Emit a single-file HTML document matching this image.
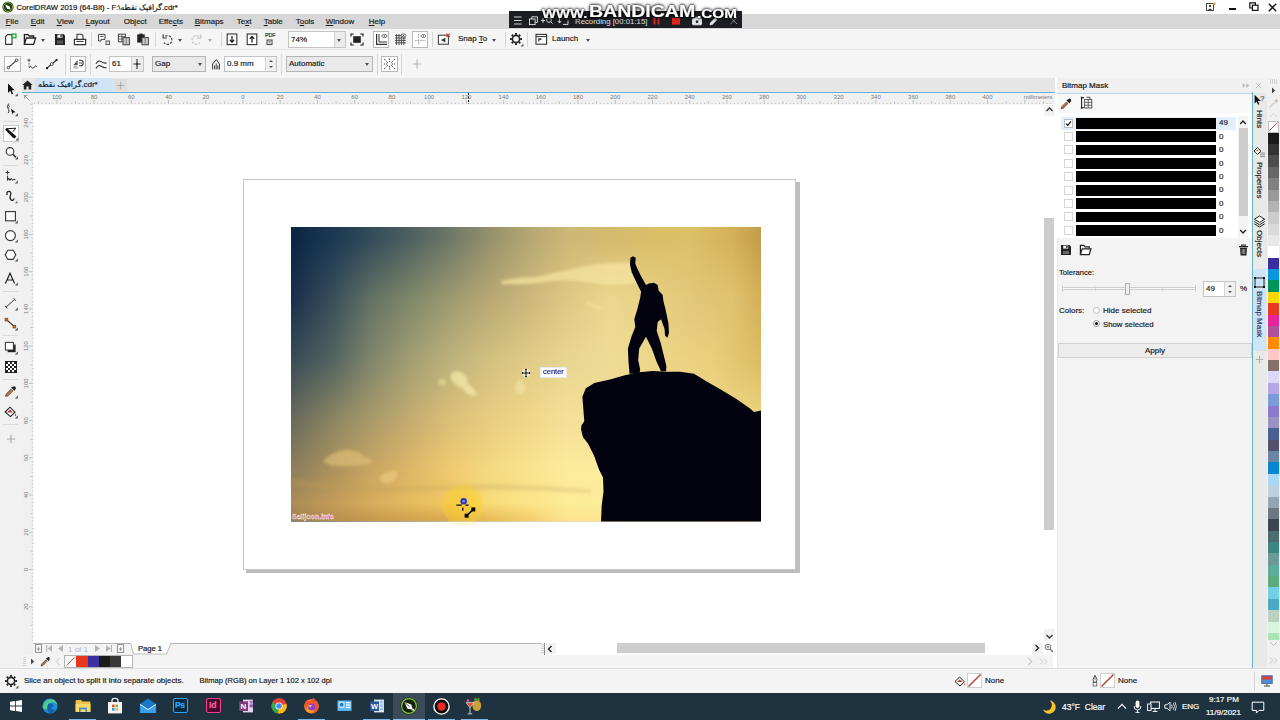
<!DOCTYPE html>
<html lang="en">
<head>
<meta charset="utf-8">
<title>CorelDRAW 2019 (64-Bit) - F:\گرافیک نقطه.cdr*</title>
<style>
*{box-sizing:border-box;margin:0;padding:0}
html,body{width:1280px;height:720px;overflow:hidden;background:#f0f0f0}
body{font-family:"Liberation Sans","DejaVu Sans",sans-serif;font-size:8px;color:#1a1a1a;position:relative}
.abs{position:absolute}
.t{position:absolute;white-space:nowrap;line-height:10px;height:10px;-webkit-text-stroke:0.180px currentColor}
.ic{position:absolute;overflow:visible}
#titlebar{left:0;top:0;width:1280px;height:14px;background:#fff}
#menubar{left:0;top:14px;width:1280px;height:15px;background:#d7d7d7}
#toolbar{left:0;top:29px;width:1280px;height:21px;background:#f5f5f5;border-bottom:1px solid #e2e2e2}
#propbar{left:0;top:50px;width:1280px;height:28px;background:#f5f5f5}
#tabbar{left:0;top:78px;width:1055px;height:14px;background:#e6e6e6}
#toolbox{left:0;top:78px;width:22px;height:590px;background:#f1f1f1}
#hruler{left:22px;top:92px;width:1033px;height:12px;background:#f0f0f0;border-top:1px solid #64b2cc}
#vruler{left:22px;top:104px;width:11px;height:537px;background:#f0f0f0}
#canvas{left:33px;top:104px;width:1010px;height:537px;background:#fff}
#vscroll{left:1043px;top:104px;width:13px;height:537px;background:#fff}
#pagenav{left:22px;top:641px;width:1033px;height:14px;background:#f3f3f3}
#docpal{left:22px;top:655px;width:1033px;height:13px;background:#f3f3f3}
#statusbar{left:0;top:668px;width:1280px;height:25px;background:#f4f4f4;border-top:1px solid #dcdcdc}
#taskbar{left:0;top:693px;width:1280px;height:27px;background:#1e3240}
#docker{left:1055px;top:78px;width:197px;height:590px;background:#f3f3f3;border-left:2px solid #fff;box-shadow:inset 1px 0 0 #e9e9e9}
#dtabs{left:1252px;top:92px;width:15px;height:576px;background:#e9e9e9;border-left:1px solid #64b2cc}
#palette{left:1267px;top:78px;width:13px;height:590px;background:#f1f1f1}
.sep{position:absolute;width:1px;background:#d6d6d6}
.box{position:absolute;border:1px solid #b9b9b9;background:#fff}
.field{position:absolute;border:1px solid #c4c4c4;background:#fff}
.arrow{position:absolute;width:0;height:0;border-left:2.700px solid transparent;border-right:2.700px solid transparent;border-top:3.200px solid #505050}

.vt{writing-mode:vertical-rl;font-size:8px;width:10px;height:auto;line-height:10px;color:#222}
.bw{height:20px;line-height:20px;font-weight:bold;color:#fff;transform-origin:0 50%;text-shadow:0 0 1.500px #000,0 0 2.500px rgba(0,0,0,0.900),0 0 4px rgba(0,0,0,0.600),0 1px 3px rgba(0,0,0,0.500)}
u{text-decoration:underline;text-underline-offset:1px}
</style>
</head>
<body>
<!-- ===== Title bar ===== -->
<div id="titlebar" class="abs">
  <svg class="ic" style="left:2px;top:1px" width="12" height="12" viewBox="0 0 12 12"><circle cx="6" cy="6" r="5.6" fill="#2b3a12"/><circle cx="6" cy="6" r="4.6" fill="none" stroke="#7fc241" stroke-width="0.9"/><path d="M3.2 3.4 L7.6 5.2 L8.6 8.6 L5 7.8 Z" fill="#fff"/></svg>
  <span class="t" id="title" style="left:16.500px;top:2.700px;font-size:7.700px;color:#111">CorelDRAW 2019 (64-Bit) - F:\<span dir="rtl">گرافیک نقطه</span>.cdr*</span>
  <svg class="ic" style="left:1205px;top:2px" width="12" height="10" viewBox="0 0 12 10"><rect x="1.5" y="1.5" width="7" height="7" fill="none" stroke="#444" stroke-width="1"/><circle cx="5" cy="4" r="1.2" fill="#444"/><path d="M2.8 8 Q5 4.8 7.2 8Z" fill="#444"/><circle cx="9.3" cy="1.8" r="1.4" fill="#e3a21a"/></svg>
  <div class="abs" style="left:1229px;top:8px;width:7px;height:2px;background:#111"></div>
  <svg class="ic" style="left:1249px;top:2px" width="10" height="10" viewBox="0 0 10 10"><path d="M3.400 6H0.800V0.800H6.400V3" fill="none" stroke="#111" stroke-width="1.200"/><rect x="3.400" y="3.200" width="5.600" height="5.200" fill="#fff" stroke="#111" stroke-width="1.200"/></svg>
  <svg class="ic" style="left:1268px;top:2.500px" width="9" height="9" viewBox="0 0 9 9"><path d="M0.8 0.8L8.2 8.2M8.2 0.8L0.8 8.2" stroke="#111" stroke-width="1.4"/></svg>
</div>

<!-- ===== Menu bar ===== -->
<div id="menubar" class="abs">
  <span class="t" style="left:5.700px;top:2.700px"><u>F</u>ile</span>
  <span class="t" style="left:30.700px;top:2.700px"><u>E</u>dit</span>
  <span class="t" style="left:56.700px;top:2.700px"><u>V</u>iew</span>
  <span class="t" style="left:85.700px;top:2.700px"><u>L</u>ayout</span>
  <span class="t" style="left:123.700px;top:2.700px">Ob<u>j</u>ect</span>
  <span class="t" style="left:158.700px;top:2.700px">Effe<u>c</u>ts</span>
  <span class="t" style="left:194.700px;top:2.700px"><u>B</u>itmaps</span>
  <span class="t" style="left:236.700px;top:2.700px">Te<u>x</u>t</span>
  <span class="t" style="left:263.700px;top:2.700px"><u>T</u>able</span>
  <span class="t" style="left:295.700px;top:2.700px">T<u>o</u>ols</span>
  <span class="t" style="left:325.700px;top:2.700px"><u>W</u>indow</span>
  <span class="t" style="left:368.700px;top:2.700px"><u>H</u>elp</span>
</div>
<!-- ===== Standard toolbar ===== -->
<div id="toolbar" class="abs">
  <!-- new -->
  <svg class="ic" style="left:4px;top:4px" width="14" height="13" viewBox="0 0 14 13"><path d="M1.6 3.6 L3.6 1.6 H8 V11.4 H1.6Z" fill="#fff" stroke="#333" stroke-width="1.1"/><rect x="7.6" y="0.4" width="5" height="5" fill="#2aa84a"/><path d="M10.1 1.4v3M8.6 2.9h3" stroke="#fff" stroke-width="1"/></svg>
  <!-- open -->
  <svg class="ic" style="left:23px;top:4px" width="14" height="13" viewBox="0 0 14 13"><path d="M1.4 11.4V1.6H5L6.2 3H10.6V5" fill="none" stroke="#222" stroke-width="1.3"/><path d="M1.4 11.4L3.4 5H12.6L10.6 11.4Z" fill="#fff" stroke="#222" stroke-width="1.3"/></svg>
  <div class="arrow" style="left:41px;top:10px"></div>
  <!-- save -->
  <svg class="ic" style="left:54px;top:4px" width="12" height="13" viewBox="0 0 12 13"><path d="M1 1H9.6L11 2.4V12H1Z" fill="#222"/><rect x="3.4" y="1.6" width="5" height="3.2" fill="#f5f5f5"/><rect x="6.4" y="2" width="1.3" height="2.2" fill="#222"/><rect x="3" y="7.4" width="6" height="3.4" fill="#555"/></svg>
  <!-- print -->
  <svg class="ic" style="left:73px;top:4px" width="14" height="13" viewBox="0 0 14 13"><path d="M4 6.2V1.2H8.6L10 2.6V6.2" fill="#fff" stroke="#333" stroke-width="1.1"/><path d="M1.4 6.4H12.6V11.6H1.4Z" fill="#fff" stroke="#333" stroke-width="1.2"/><path d="M3.4 8.4H10.6" stroke="#333" stroke-width="1"/></svg>
  <div class="sep" style="left:91px;top:3px;height:15px"></div>
  <!-- cut/copy/paste-like -->
  <svg class="ic" style="left:97px;top:4px" width="14" height="13" viewBox="0 0 14 13"><path d="M1.6 1.4H8V6.4H4V8H1.6Z" fill="#fff" stroke="#444" stroke-width="1"/><path d="M3 3.4H6.6" stroke="#444" stroke-width="0.9"/><rect x="9" y="8" width="3.6" height="3.6" fill="#ddd" stroke="#555" stroke-width="0.9"/></svg>
  <svg class="ic" style="left:117px;top:4px" width="14" height="13" viewBox="0 0 14 13"><rect x="1.4" y="1.2" width="7" height="7.6" fill="#fff" stroke="#444" stroke-width="1"/><path d="M1.4 3.6H8.4M1.4 6H8.4M4.8 1.2V8.8" stroke="#444" stroke-width="0.8"/><rect x="6" y="4.6" width="6.4" height="7.2" fill="#ccc" stroke="#444" stroke-width="1"/><path d="M9.2 4.6V11.8" stroke="#666" stroke-width="0.8"/></svg>
  <svg class="ic" style="left:136px;top:4px" width="14" height="13" viewBox="0 0 14 13"><rect x="1.2" y="1.4" width="7.6" height="8.2" fill="#222"/><rect x="3.4" y="0.6" width="3.2" height="2" fill="#222"/><rect x="6" y="4.6" width="6.4" height="7.2" fill="#ccc" stroke="#444" stroke-width="1"/><path d="M9.2 4.6V11.8" stroke="#666" stroke-width="0.8"/></svg>
  <div class="sep" style="left:155px;top:3px;height:15px"></div>
  <!-- undo / redo -->
  <svg class="ic" style="left:161px;top:4px" width="13" height="13" viewBox="0 0 13 13"><path d="M4.2 3.2A4.4 4.4 0 1 1 3 9.6" fill="none" stroke="#444" stroke-width="1.2" stroke-dasharray="2.4 1.2"/><path d="M2.2 1.2V5H6" fill="none" stroke="#444" stroke-width="1.2"/></svg>
  <div class="arrow" style="left:178px;top:10px"></div>
  <svg class="ic" style="left:190px;top:4px" width="13" height="13" viewBox="0 0 13 13"><path d="M8.8 3.2A4.4 4.4 0 1 0 10 9.6" fill="none" stroke="#c4c4c4" stroke-width="1.2" stroke-dasharray="2.4 1.2"/><path d="M10.8 1.2V5H7" fill="none" stroke="#c4c4c4" stroke-width="1.2"/></svg>
  <div class="arrow" style="left:208px;top:10px;border-top-color:#aaa"></div>
  <div class="sep" style="left:221px;top:3px;height:15px"></div>
  <!-- import / export / pdf -->
  <svg class="ic" style="left:226px;top:4px" width="12" height="13" viewBox="0 0 12 13"><rect x="1.2" y="1" width="9.6" height="10.6" fill="#fff" stroke="#333" stroke-width="1.1"/><path d="M6 3V9M3.8 6.8L6 9.2L8.2 6.8" fill="none" stroke="#222" stroke-width="1.3"/></svg>
  <svg class="ic" style="left:246px;top:4px" width="12" height="13" viewBox="0 0 12 13"><rect x="1.2" y="1" width="9.6" height="10.6" fill="#fff" stroke="#333" stroke-width="1.1"/><path d="M6 9.6V3.6M3.8 5.8L6 3.4L8.2 5.8" fill="none" stroke="#222" stroke-width="1.3"/></svg>
  <span class="t" style="left:265px;top:3px;font-size:5.5px;line-height:6px;height:6px;color:#333;letter-spacing:-0.2px">PDF</span>
  <svg class="ic" style="left:266px;top:10px" width="8" height="7" viewBox="0 0 8 7"><rect x="1" y="1" width="5" height="4.6" fill="none" stroke="#444" stroke-width="1"/><path d="M2.4 2.4H4.6M2.4 4H4.6" stroke="#444" stroke-width="0.7"/></svg>
  <!-- zoom combo -->
  <div class="field" style="left:288px;top:2px;width:58px;height:17px"></div>
  <span class="t" style="left:291px;top:6px;font-size:8px">74%</span>
  <div class="abs" style="left:334px;top:3px;width:11px;height:15px;background:#ececec;border-left:1px solid #d0d0d0"></div>
  <div class="arrow" style="left:337px;top:10px"></div>
  <!-- fullscreen -->
  <svg class="ic" style="left:350px;top:4px" width="14" height="13" viewBox="0 0 14 13"><rect x="3.2" y="3.2" width="7.6" height="6.6" fill="#222"/><path d="M1 3.6V1H3.8M10.2 1H13V3.6M13 9.4V12H10.2M3.8 12H1V9.4" fill="none" stroke="#222" stroke-width="1.2"/></svg>
  <!-- rulers / grid / guides -->
  <div class="box" style="left:373px;top:2px;width:16px;height:17px;background:#fdfdfd"></div>
  <svg class="ic" style="left:375px;top:4px" width="13" height="13" viewBox="0 0 13 13"><path d="M1.6 1V11.4H12" fill="none" stroke="#333" stroke-width="1.2"/><path d="M4 1V9H12" fill="none" stroke="#333" stroke-width="1"/><ellipse cx="9.4" cy="3" rx="2.6" ry="1.6" fill="#fff" stroke="#555" stroke-width="0.8"/><circle cx="9.4" cy="3" r="0.7" fill="#444"/></svg>
  <svg class="ic" style="left:394px;top:4px" width="13" height="13" viewBox="0 0 13 13"><path d="M1 2.6H12M1 5H12M1 7.4H12M1 9.8H12M2.6 1V12M5 1V12M7.4 1V12M9.8 1V12" stroke="#444" stroke-width="0.9"/><ellipse cx="9.6" cy="2.4" rx="2.4" ry="1.5" fill="#fff" stroke="#555" stroke-width="0.8"/><circle cx="9.6" cy="2.4" r="0.7" fill="#444"/></svg>
  <div class="box" style="left:412px;top:2px;width:16px;height:17px;background:#fdfdfd"></div>
  <svg class="ic" style="left:414px;top:4px" width="13" height="13" viewBox="0 0 13 13"><path d="M4.6 1V12M1 7.6H12" stroke="#999" stroke-width="0.9" stroke-dasharray="1.6 1"/><ellipse cx="9.4" cy="3" rx="2.4" ry="1.5" fill="#fff" stroke="#666" stroke-width="0.8"/><circle cx="9.4" cy="3" r="0.7" fill="#555"/></svg>
  <div class="sep" style="left:432px;top:3px;height:15px"></div>
  <!-- snap off -->
  <svg class="ic" style="left:437px;top:4px" width="14" height="13" viewBox="0 0 14 13"><rect x="1.4" y="2.2" width="10" height="9" fill="#fff" stroke="#444" stroke-width="1.1"/><path d="M4 7L8.4 4.8V9.4Z" fill="#333"/><path d="M9.4 0.6L12.8 4M12.8 0.6L9.4 4" stroke="#d83a2e" stroke-width="1.1"/></svg>
  <span class="t" style="left:458px;top:5px;font-size:8px">Snap <u>T</u>o</span>
  <div class="arrow" style="left:492px;top:10px"></div>
  <div class="sep" style="left:505px;top:3px;height:15px"></div>
  <!-- gear -->
  <svg class="ic" style="left:509px;top:3px" width="15" height="15" viewBox="0 0 15 15"><circle cx="7" cy="7" r="3.6" fill="none" stroke="#222" stroke-width="1.6"/><g stroke="#222" stroke-width="2"><path d="M7 1V2.8M7 11.2V13M1 7H2.8M11.2 7H13M2.8 2.8L4 4M10 10L11.2 11.2M11.2 2.8L10 4M4 10L2.8 11.2"/></g><path d="M14.4 11.6V14.4H11.6Z" fill="#555"/></svg>
  <div class="sep" style="left:527px;top:3px;height:15px"></div>
  <!-- launch -->
  <svg class="ic" style="left:535px;top:4px" width="13" height="13" viewBox="0 0 13 13"><rect x="1" y="1.4" width="10.6" height="9.8" fill="#fff" stroke="#333" stroke-width="1.1"/><path d="M1 3.6H11.6" stroke="#333" stroke-width="1"/><path d="M3.2 5.2H6.4V7H4.4V8.8H3.2Z" fill="#444"/></svg>
  <span class="t" style="left:552px;top:5px;font-size:8px">Launch</span>
  <div class="arrow" style="left:586px;top:10px"></div>
</div>
<!-- ===== Property bar ===== -->
<div id="propbar" class="abs">
  <div class="box" style="left:4px;top:6px;width:17px;height:16px"></div>
  <svg class="ic" style="left:6px;top:8px" width="13" height="12" viewBox="0 0 13 12"><path d="M2.4 9.6L10.4 2.4" stroke="#333" stroke-width="1.1"/><circle cx="2.4" cy="9.6" r="1.3" fill="#fff" stroke="#333" stroke-width="0.9"/><circle cx="10.6" cy="2.2" r="1.3" fill="#fff" stroke="#333" stroke-width="0.9"/></svg>
  <svg class="ic" style="left:25px;top:8px" width="14" height="12" viewBox="0 0 14 12"><path d="M4 0.6V3.8M2.4 2.2H5.6" stroke="#444" stroke-width="0.9"/><path d="M4 4.8V10" stroke="#444" stroke-width="0.9" stroke-dasharray="1 0.8"/><path d="M4 9.6Q5.4 7.4 6.6 9.4T9.2 9.2T11.8 8.6" fill="none" stroke="#333" stroke-width="1"/></svg>
  <svg class="ic" style="left:45px;top:8px" width="14" height="12" viewBox="0 0 14 12"><path d="M2 10.2L11.6 2" stroke="#222" stroke-width="1.1"/><circle cx="2" cy="10.2" r="1.1" fill="#111"/><circle cx="11.6" cy="2" r="1.1" fill="#111"/><circle cx="6.8" cy="6.1" r="1.5" fill="#fff" stroke="#333" stroke-width="0.8"/></svg>
  <div class="sep" style="left:65px;top:4px;height:21px"></div>
  <div class="box" style="left:70px;top:6px;width:16px;height:16px"></div>
  <svg class="ic" style="left:72px;top:8px" width="13" height="12" viewBox="0 0 13 12"><path d="M1.4 7L5.6 2V7Z" fill="#555"/><rect x="1.4" y="7.4" width="4.2" height="3.4" fill="#bbb"/><path d="M7 2.2H8.4A2.8 2.8 0 0 1 8.4 7.8H7" fill="none" stroke="#333" stroke-width="1.1"/><path d="M7 5H10" stroke="#333" stroke-width="0.9"/></svg>
  <div class="sep" style="left:90px;top:4px;height:21px"></div>
  <svg class="ic" style="left:95px;top:8px" width="13" height="12" viewBox="0 0 13 12"><path d="M1 5.8Q3.4 1.6 6.2 3.6T11.6 5" fill="none" stroke="#333" stroke-width="1.1"/><path d="M1 10.4Q3.4 6.2 6.2 8.2T11.6 9.6" fill="none" stroke="#333" stroke-width="1.1"/></svg>
  <div class="field" style="left:109px;top:6px;width:35px;height:16px"></div>
  <span class="t" style="left:112px;top:9px;font-size:8px">61</span>
  <div class="abs" style="left:131px;top:7px;width:12px;height:14px;background:#ececec;border-left:1px solid #d4d4d4"></div>
  <svg class="ic" style="left:132px;top:8px" width="10" height="12" viewBox="0 0 10 12"><path d="M5 1V11M1.4 6H8.6" stroke="#333" stroke-width="1.1"/><path d="M5 4.6L6.4 6L5 7.4L3.6 6Z" fill="#333"/></svg>
  <!-- Gap combo -->
  <div class="field" style="left:152px;top:6px;width:54px;height:16px;background:#e9e9e9;border-color:#b5b5b5"></div>
  <span class="t" style="left:155px;top:9px;font-size:8px">Gap</span>
  <div class="arrow" style="left:198px;top:13px"></div>
  <svg class="ic" style="left:211px;top:8px" width="10" height="13" viewBox="0 0 10 13"><path d="M1.6 11.4V6L5.4 1.6L8.4 6V11.4" fill="none" stroke="#333" stroke-width="1"/><path d="M3.6 11.4V7.4M5.2 11.4V5.4M6.8 11.4V7.4" stroke="#333" stroke-width="0.9"/></svg>
  <div class="field" style="left:224px;top:6px;width:53px;height:16px"></div>
  <span class="t" style="left:227px;top:9px;font-size:8px">0.9 mm</span>
  <div class="abs" style="left:265px;top:7px;width:11px;height:14px;background:#f0f0f0;border-left:1px solid #d4d4d4"></div>
  <div class="arrow" style="left:269px;top:10px;border-left-width:2px;border-right-width:2px;border-top:0;border-bottom:2.5px solid #555"></div>
  <div class="arrow" style="left:269px;top:16px;border-left-width:2px;border-right-width:2px;border-top-width:2.5px"></div>
  <div class="sep" style="left:281px;top:4px;height:21px"></div>
  <!-- Automatic combo -->
  <div class="field" style="left:286px;top:6px;width:87px;height:16px;background:#e9e9e9;border-color:#b5b5b5"></div>
  <span class="t" style="left:289px;top:9px;font-size:8px">Automatic</span>
  <div class="arrow" style="left:365px;top:13px"></div>
  <div class="sep" style="left:377px;top:4px;height:21px"></div>
  <div class="box" style="left:381px;top:6px;width:17px;height:16px"></div>
  <svg class="ic" style="left:383px;top:8px" width="13" height="12" viewBox="0 0 13 12"><g stroke="#333" stroke-width="0.9" stroke-dasharray="1.4 0.9"><path d="M1 1L5 5M12 1L8 5M1 11L5 7M12 11L8 7M6.5 0.6V4M6.5 8V11.4M0.8 6H4.4M8.6 6H12.2"/></g></svg>
  <div class="sep" style="left:401px;top:4px;height:21px"></div>
  <svg class="ic" style="left:412px;top:9px" width="10" height="10" viewBox="0 0 10 10"><path d="M5 0.6V9.4M0.6 5H9.4" stroke="#b5b5b5" stroke-width="1.1"/></svg>
</div>
<!-- ===== Rulers ===== -->
<div id="hruler" class="abs">
<svg class="ic" style="left:0;top:0" width="1032" height="11" viewBox="0 0 1032 11" font-family="Liberation Sans, sans-serif" font-size="6" fill="#7a7a7a" text-anchor="middle">
<path d="M2.5 2.5L7.500 7.500M2.500 2.500V5.500M2.500 2.500H5.500" stroke="#888" stroke-width="0.800" fill="none"/>
<path d="M12.5 9.8V11M16.3 8.4V11M20.0 9.8V11M23.7 9.8V11M27.4 9.8V11M31.1 9.8V11M34.9 7.0V11M38.6 9.8V11M42.3 9.8V11M46.0 9.8V11M49.8 9.8V11M53.5 8.4V11M57.2 9.8V11M60.9 9.8V11M64.7 9.8V11M68.4 9.8V11M72.1 7.0V11M75.8 9.8V11M79.5 9.8V11M83.3 9.8V11M87.0 9.8V11M90.7 8.4V11M94.4 9.8V11M98.2 9.8V11M101.9 9.8V11M105.6 9.8V11M109.3 7.0V11M113.0 9.8V11M116.8 9.8V11M120.5 9.8V11M124.2 9.8V11M127.9 8.4V11M131.7 9.8V11M135.4 9.8V11M139.1 9.8V11M142.8 9.8V11M146.5 7.0V11M150.3 9.8V11M154.0 9.8V11M157.7 9.8V11M161.4 9.8V11M165.2 8.4V11M168.9 9.8V11M172.6 9.8V11M176.3 9.8V11M180.1 9.8V11M183.8 7.0V11M187.5 9.8V11M191.2 9.8V11M194.9 9.8V11M198.7 9.8V11M202.4 8.4V11M206.1 9.8V11M209.8 9.8V11M213.6 9.8V11M217.3 9.8V11M221.0 7.0V11M224.7 9.8V11M228.4 9.8V11M232.2 9.8V11M235.9 9.8V11M239.6 8.4V11M243.3 9.8V11M247.1 9.8V11M250.8 9.8V11M254.5 9.8V11M258.2 7.0V11M261.9 9.8V11M265.7 9.8V11M269.4 9.8V11M273.1 9.8V11M276.8 8.4V11M280.6 9.8V11M284.3 9.8V11M288.0 9.8V11M291.7 9.8V11M295.5 7.0V11M299.2 9.8V11M302.9 9.8V11M306.6 9.8V11M310.3 9.8V11M314.1 8.4V11M317.8 9.8V11M321.5 9.8V11M325.2 9.8V11M329.0 9.8V11M332.7 7.0V11M336.4 9.8V11M340.1 9.8V11M343.8 9.8V11M347.6 9.8V11M351.3 8.4V11M355.0 9.8V11M358.7 9.8V11M362.5 9.8V11M366.2 9.8V11M369.9 7.0V11M373.6 9.8V11M377.3 9.8V11M381.1 9.8V11M384.8 9.8V11M388.5 8.4V11M392.2 9.8V11M396.0 9.8V11M399.7 9.8V11M403.4 9.8V11M407.1 7.0V11M410.9 9.8V11M414.6 9.8V11M418.3 9.8V11M422.0 9.8V11M425.7 8.4V11M429.5 9.8V11M433.2 9.8V11M436.9 9.8V11M440.6 9.8V11M444.4 7.0V11M448.1 9.8V11M451.8 9.8V11M455.5 9.8V11M459.2 9.8V11M463.0 8.4V11M466.7 9.8V11M470.4 9.8V11M474.1 9.8V11M477.9 9.8V11M481.6 7.0V11M485.3 9.8V11M489.0 9.8V11M492.7 9.8V11M496.5 9.8V11M500.2 8.4V11M503.9 9.8V11M507.6 9.8V11M511.4 9.8V11M515.1 9.8V11M518.8 7.0V11M522.5 9.8V11M526.3 9.8V11M530.0 9.8V11M533.7 9.8V11M537.4 8.4V11M541.1 9.8V11M544.9 9.8V11M548.6 9.8V11M552.3 9.8V11M556.0 7.0V11M559.8 9.8V11M563.5 9.8V11M567.2 9.8V11M570.9 9.8V11M574.6 8.4V11M578.4 9.8V11M582.1 9.8V11M585.8 9.8V11M589.5 9.8V11M593.3 7.0V11M597.0 9.8V11M600.7 9.8V11M604.4 9.8V11M608.2 9.8V11M611.9 8.4V11M615.6 9.8V11M619.3 9.8V11M623.0 9.8V11M626.8 9.8V11M630.5 7.0V11M634.2 9.8V11M637.9 9.8V11M641.7 9.8V11M645.4 9.8V11M649.1 8.4V11M652.8 9.8V11M656.5 9.8V11M660.3 9.8V11M664.0 9.8V11M667.7 7.0V11M671.4 9.8V11M675.2 9.8V11M678.9 9.8V11M682.6 9.8V11M686.3 8.4V11M690.0 9.8V11M693.8 9.8V11M697.5 9.8V11M701.2 9.8V11M704.9 7.0V11M708.7 9.8V11M712.4 9.8V11M716.1 9.8V11M719.8 9.8V11M723.6 8.4V11M727.3 9.8V11M731.0 9.8V11M734.7 9.8V11M738.4 9.8V11M742.2 7.0V11M745.9 9.8V11M749.6 9.8V11M753.3 9.8V11M757.1 9.8V11M760.8 8.4V11M764.5 9.8V11M768.2 9.8V11M771.9 9.8V11M775.7 9.8V11M779.4 7.0V11M783.1 9.8V11M786.8 9.8V11M790.6 9.8V11M794.3 9.8V11M798.0 8.4V11M801.7 9.8V11M805.4 9.8V11M809.2 9.8V11M812.9 9.8V11M816.6 7.0V11M820.3 9.8V11M824.1 9.8V11M827.8 9.8V11M831.5 9.8V11M835.2 8.4V11M839.0 9.8V11M842.7 9.8V11M846.4 9.8V11M850.1 9.8V11M853.8 7.0V11M857.6 9.8V11M861.3 9.8V11M865.0 9.8V11M868.7 9.8V11M872.5 8.4V11M876.2 9.8V11M879.9 9.8V11M883.6 9.8V11M887.3 9.8V11M891.1 7.0V11M894.8 9.8V11M898.5 9.8V11M902.2 9.8V11M906.0 9.8V11M909.7 8.4V11M913.4 9.8V11M917.1 9.8V11M920.8 9.8V11M924.6 9.8V11M928.3 7.0V11M932.0 9.8V11M935.7 9.8V11M939.5 9.8V11M943.2 9.8V11M946.9 8.4V11M950.6 9.8V11M954.4 9.8V11M958.1 9.8V11M961.8 9.8V11M965.5 7.0V11M969.2 9.8V11M973.0 9.8V11M976.7 9.8V11M980.4 9.8V11M984.1 8.4V11M987.9 9.8V11M991.6 9.8V11M995.3 9.8V11M999.0 9.8V11M1002.7 7.0V11M1006.5 9.8V11M1010.2 9.8V11M1013.9 9.8V11M1017.6 9.8V11M1021.4 8.4V11M1025.1 9.8V11M1028.8 9.8V11" stroke="#b4b4b4" stroke-width="0.800" fill="none"/>
<text x="34.9" y="6.100">100</text>
<text x="72.1" y="6.100">80</text>
<text x="109.3" y="6.100">60</text>
<text x="146.5" y="6.100">40</text>
<text x="183.8" y="6.100">20</text>
<text x="221.0" y="6.100">0</text>
<text x="258.2" y="6.100">20</text>
<text x="295.5" y="6.100">40</text>
<text x="332.7" y="6.100">60</text>
<text x="369.9" y="6.100">80</text>
<text x="407.1" y="6.100">100</text>
<text x="444.4" y="6.100">120</text>
<text x="481.6" y="6.100">140</text>
<text x="518.8" y="6.100">160</text>
<text x="556.0" y="6.100">180</text>
<text x="593.3" y="6.100">200</text>
<text x="630.5" y="6.100">220</text>
<text x="667.7" y="6.100">240</text>
<text x="704.9" y="6.100">260</text>
<text x="742.2" y="6.100">280</text>
<text x="779.4" y="6.100">300</text>
<text x="816.6" y="6.100">320</text>
<text x="853.8" y="6.100">340</text>
<text x="891.1" y="6.100">360</text>
<text x="928.3" y="6.100">380</text>
<text x="965.5" y="6.100">400</text>
<text x="1016" y="6.100" font-size="6">millimeters</text>
<path d="M446.500 0V11" stroke="#111" stroke-width="1" stroke-dasharray="2 1.500"/>
</svg>
</div>
<div id="vruler" class="abs">
<svg class="ic" style="left:0;top:0" width="11" height="537" viewBox="0 0 11 537" font-family="Liberation Sans, sans-serif" font-size="6" fill="#7a7a7a" text-anchor="middle">
<path d="M9.8 536.2H11M9.8 532.5H11M9.8 528.8H11M9.8 525.1H11M8.4 521.3H11M9.8 517.6H11M9.8 513.9H11M9.8 510.2H11M9.8 506.4H11M7.0 502.7H11M9.8 499.0H11M9.8 495.3H11M9.8 491.6H11M9.8 487.8H11M8.4 484.1H11M9.8 480.4H11M9.8 476.7H11M9.8 472.9H11M9.8 469.2H11M7.0 465.5H11M9.8 461.8H11M9.8 458.1H11M9.8 454.3H11M9.8 450.6H11M8.4 446.9H11M9.8 443.2H11M9.8 439.4H11M9.8 435.7H11M9.8 432.0H11M7.0 428.3H11M9.8 424.6H11M9.8 420.8H11M9.8 417.1H11M9.8 413.4H11M8.4 409.7H11M9.8 405.9H11M9.8 402.2H11M9.8 398.5H11M9.8 394.8H11M7.0 391.0H11M9.8 387.3H11M9.8 383.6H11M9.8 379.9H11M9.8 376.2H11M8.4 372.4H11M9.8 368.7H11M9.8 365.0H11M9.8 361.3H11M9.8 357.5H11M7.0 353.8H11M9.8 350.1H11M9.8 346.4H11M9.8 342.7H11M9.8 338.9H11M8.4 335.2H11M9.8 331.5H11M9.8 327.8H11M9.8 324.0H11M9.8 320.3H11M7.0 316.6H11M9.8 312.9H11M9.8 309.2H11M9.8 305.4H11M9.8 301.7H11M8.4 298.0H11M9.8 294.3H11M9.8 290.5H11M9.8 286.8H11M9.8 283.1H11M7.0 279.4H11M9.8 275.6H11M9.8 271.9H11M9.8 268.2H11M9.8 264.5H11M8.4 260.8H11M9.8 257.0H11M9.8 253.3H11M9.8 249.6H11M9.8 245.9H11M7.0 242.1H11M9.8 238.4H11M9.8 234.7H11M9.8 231.0H11M9.8 227.3H11M8.4 223.5H11M9.8 219.8H11M9.8 216.1H11M9.8 212.4H11M9.8 208.6H11M7.0 204.9H11M9.8 201.2H11M9.8 197.5H11M9.8 193.8H11M9.8 190.0H11M8.4 186.3H11M9.8 182.6H11M9.8 178.9H11M9.8 175.1H11M9.8 171.4H11M7.0 167.7H11M9.8 164.0H11M9.8 160.2H11M9.8 156.5H11M9.8 152.8H11M8.4 149.1H11M9.8 145.4H11M9.8 141.6H11M9.8 137.9H11M9.8 134.2H11M7.0 130.5H11M9.8 126.7H11M9.8 123.0H11M9.8 119.3H11M9.8 115.6H11M8.4 111.9H11M9.8 108.1H11M9.8 104.4H11M9.8 100.7H11M9.8 97.0H11M7.0 93.2H11M9.8 89.5H11M9.8 85.8H11M9.8 82.1H11M9.8 78.3H11M8.4 74.6H11M9.8 70.9H11M9.8 67.2H11M9.8 63.5H11M9.8 59.7H11M7.0 56.0H11M9.8 52.3H11M9.8 48.6H11M9.8 44.8H11M9.8 41.1H11M8.4 37.4H11M9.8 33.7H11M9.8 30.0H11M9.8 26.2H11M9.8 22.5H11M7.0 18.8H11M9.8 15.1H11M9.8 11.3H11M9.8 7.6H11M9.8 3.9H11M8.4 0.2H11" stroke="#b4b4b4" stroke-width="0.800" fill="none"/>
<text transform="translate(6.300 502.7) rotate(-90)">20</text>
<text transform="translate(6.300 465.5) rotate(-90)">0</text>
<text transform="translate(6.300 428.3) rotate(-90)">20</text>
<text transform="translate(6.300 391.0) rotate(-90)">40</text>
<text transform="translate(6.300 353.8) rotate(-90)">60</text>
<text transform="translate(6.300 316.6) rotate(-90)">80</text>
<text transform="translate(6.300 279.4) rotate(-90)">100</text>
<text transform="translate(6.300 242.1) rotate(-90)">120</text>
<text transform="translate(6.300 204.9) rotate(-90)">140</text>
<text transform="translate(6.300 167.7) rotate(-90)">160</text>
<text transform="translate(6.300 130.5) rotate(-90)">180</text>
<text transform="translate(6.300 93.2) rotate(-90)">200</text>
<text transform="translate(6.300 56.0) rotate(-90)">220</text>
<text transform="translate(6.300 18.8) rotate(-90)">240</text>
</svg>
</div>
<!-- ===== Drawing window ===== -->
<div id="canvas" class="abs"></div>
<div class="abs" style="left:33px;top:104px;width:1010px;height:1px;background:#f7f7f7"></div>
<div class="abs" style="left:33px;top:104px;width:1px;height:537px;background:#f7f7f7"></div>
<div class="abs" style="left:246px;top:182px;width:554px;height:391px;background:#bdbdbd"></div>
<div class="abs" id="page" style="left:243px;top:179px;width:553px;height:391px;background:#fff;border:1px solid #c6c6c6"></div>
<svg class="ic" id="photo" style="left:291px;top:227px" width="470" height="294.500" viewBox="0 0 470 294" preserveAspectRatio="none">
  <defs>
    <linearGradient id="r0" x1="0" y1="0" x2="1" y2="0"><stop offset="0.00" stop-color="#0b2544"/><stop offset="0.09" stop-color="#1c3852"/><stop offset="0.17" stop-color="#324c5a"/><stop offset="0.26" stop-color="#506260"/><stop offset="0.34" stop-color="#6e7868"/><stop offset="0.42" stop-color="#94906c"/><stop offset="0.51" stop-color="#b6a872"/><stop offset="0.59" stop-color="#ccb876"/><stop offset="0.68" stop-color="#d4ba6e"/><stop offset="0.77" stop-color="#dabe68"/><stop offset="0.85" stop-color="#dcc06a"/><stop offset="0.94" stop-color="#d4b058"/><stop offset="1.00" stop-color="#c49c48"/></linearGradient>
    <linearGradient id="r1" x1="0" y1="0" x2="1" y2="0"><stop offset="0.00" stop-color="#182f4b"/><stop offset="0.09" stop-color="#3a505b"/><stop offset="0.17" stop-color="#647264"/><stop offset="0.26" stop-color="#828a6a"/><stop offset="0.34" stop-color="#9e9a70"/><stop offset="0.42" stop-color="#b8a874"/><stop offset="0.51" stop-color="#ceb87c"/><stop offset="0.59" stop-color="#e0c884"/><stop offset="0.68" stop-color="#ecd88e"/><stop offset="0.77" stop-color="#e6d084"/><stop offset="0.85" stop-color="#e2c87a"/><stop offset="0.94" stop-color="#e0c270"/><stop offset="1.00" stop-color="#d4b058"/></linearGradient>
    <linearGradient id="m1" gradientUnits="userSpaceOnUse" x1="0" y1="11" x2="0" y2="73"><stop offset="0" stop-color="#fff" stop-opacity="0"/><stop offset="1" stop-color="#fff" stop-opacity="1"/></linearGradient>
    <mask id="k1" maskUnits="userSpaceOnUse" x="0" y="0" width="470" height="294"><rect x="0" y="11" width="470" height="283" fill="url(#m1)"/></mask>
    <linearGradient id="r2" x1="0" y1="0" x2="1" y2="0"><stop offset="0.00" stop-color="#384c56"/><stop offset="0.09" stop-color="#546461"/><stop offset="0.17" stop-color="#80866c"/><stop offset="0.26" stop-color="#a4a074"/><stop offset="0.34" stop-color="#beb27c"/><stop offset="0.42" stop-color="#d2c080"/><stop offset="0.51" stop-color="#e0cc88"/><stop offset="0.59" stop-color="#e8d690"/><stop offset="0.68" stop-color="#eedc96"/><stop offset="0.80" stop-color="#ecd486"/><stop offset="0.90" stop-color="#eace7c"/><stop offset="1.00" stop-color="#dcbc64"/></linearGradient>
    <linearGradient id="m2" gradientUnits="userSpaceOnUse" x1="0" y1="73" x2="0" y2="133"><stop offset="0" stop-color="#fff" stop-opacity="0"/><stop offset="1" stop-color="#fff" stop-opacity="1"/></linearGradient>
    <mask id="k2" maskUnits="userSpaceOnUse" x="0" y="0" width="470" height="294"><rect x="0" y="73" width="470" height="221" fill="url(#m2)"/></mask>
    <linearGradient id="r3" x1="0" y1="0" x2="1" y2="0"><stop offset="0.00" stop-color="#686a5c"/><stop offset="0.09" stop-color="#8c8662"/><stop offset="0.17" stop-color="#aa9a6a"/><stop offset="0.26" stop-color="#c6ae70"/><stop offset="0.34" stop-color="#dcc078"/><stop offset="0.42" stop-color="#e8cc80"/><stop offset="0.51" stop-color="#f0d888"/><stop offset="0.59" stop-color="#f4e098"/><stop offset="1.00" stop-color="#ecd480"/></linearGradient>
    <linearGradient id="m3" gradientUnits="userSpaceOnUse" x1="0" y1="133" x2="0" y2="193"><stop offset="0" stop-color="#fff" stop-opacity="0"/><stop offset="1" stop-color="#fff" stop-opacity="1"/></linearGradient>
    <mask id="k3" maskUnits="userSpaceOnUse" x="0" y="0" width="470" height="294"><rect x="0" y="133" width="470" height="161" fill="url(#m3)"/></mask>
    <linearGradient id="r4" x1="0" y1="0" x2="1" y2="0"><stop offset="0.00" stop-color="#8e7e5c"/><stop offset="0.09" stop-color="#ac925c"/><stop offset="0.17" stop-color="#c8a662"/><stop offset="0.26" stop-color="#e0b868"/><stop offset="0.34" stop-color="#f0ca70"/><stop offset="0.42" stop-color="#f4d880"/><stop offset="0.51" stop-color="#f8e490"/><stop offset="0.59" stop-color="#fcec9c"/><stop offset="1.00" stop-color="#fcec9c"/></linearGradient>
    <linearGradient id="m4" gradientUnits="userSpaceOnUse" x1="0" y1="193" x2="0" y2="243"><stop offset="0" stop-color="#fff" stop-opacity="0"/><stop offset="1" stop-color="#fff" stop-opacity="1"/></linearGradient>
    <mask id="k4" maskUnits="userSpaceOnUse" x="0" y="0" width="470" height="294"><rect x="0" y="193" width="470" height="101" fill="url(#m4)"/></mask>
    <linearGradient id="r5" x1="0" y1="0" x2="1" y2="0"><stop offset="0.00" stop-color="#aa8c56"/><stop offset="0.09" stop-color="#c49c58"/><stop offset="0.17" stop-color="#d8ac5c"/><stop offset="0.26" stop-color="#e8bc60"/><stop offset="0.34" stop-color="#f2c864"/><stop offset="0.42" stop-color="#f8dc78"/><stop offset="0.51" stop-color="#fbe488"/><stop offset="0.59" stop-color="#fcec98"/><stop offset="1.00" stop-color="#fcec98"/></linearGradient>
    <linearGradient id="m5" gradientUnits="userSpaceOnUse" x1="0" y1="243" x2="0" y2="276"><stop offset="0" stop-color="#fff" stop-opacity="0"/><stop offset="1" stop-color="#fff" stop-opacity="1"/></linearGradient>
    <mask id="k5" maskUnits="userSpaceOnUse" x="0" y="0" width="470" height="294"><rect x="0" y="243" width="470" height="51" fill="url(#m5)"/></mask>
    <linearGradient id="r6" x1="0" y1="0" x2="1" y2="0"><stop offset="0.00" stop-color="#a08050"/><stop offset="0.09" stop-color="#b89050"/><stop offset="0.17" stop-color="#c89a50"/><stop offset="0.26" stop-color="#d4a450"/><stop offset="0.34" stop-color="#dcac50"/><stop offset="0.42" stop-color="#e8bc58"/><stop offset="0.51" stop-color="#f4d070"/><stop offset="0.59" stop-color="#fce490"/><stop offset="1.00" stop-color="#fce490"/></linearGradient>
    <linearGradient id="m6" gradientUnits="userSpaceOnUse" x1="0" y1="276" x2="0" y2="291"><stop offset="0" stop-color="#fff" stop-opacity="0"/><stop offset="1" stop-color="#fff" stop-opacity="1"/></linearGradient>
    <mask id="k6" maskUnits="userSpaceOnUse" x="0" y="0" width="470" height="294"><rect x="0" y="276" width="470" height="18" fill="url(#m6)"/></mask>
    <filter id="blur1" x="-20%" y="-50%" width="140%" height="200%"><feGaussianBlur stdDeviation="1.600"/></filter>
  </defs>
  <rect width="470" height="294" fill="url(#r0)"/>
  <rect width="470" height="294" fill="url(#r1)" mask="url(#k1)"/>
  <rect width="470" height="294" fill="url(#r2)" mask="url(#k2)"/>
  <rect width="470" height="294" fill="url(#r3)" mask="url(#k3)"/>
  <rect width="470" height="294" fill="url(#r4)" mask="url(#k4)"/>
  <rect width="470" height="294" fill="url(#r5)" mask="url(#k5)"/>
  <rect width="470" height="294" fill="url(#r6)" mask="url(#k6)"/>
  <!-- clouds -->
  <g filter="url(#blur1)">
    <path d="M209 54Q225 50 245 50Q262 46 282 42Q310 34 345 36L348 56Q320 60 300 56Q280 52 262 54Q235 58 212 57Z" fill="#f6e6a2" opacity="0.700"/>
    <path d="M296 74L312 80L309 83L295 77Z" fill="#f4e4a0" opacity="0.600"/>
    <path d="M160 146Q166 142 172 146Q178 150 176 156Q184 160 186 168Q178 170 172 162Q164 158 160 152Z" fill="#f6e8aa" opacity="0.750"/>
    <ellipse cx="151" cy="155" rx="4" ry="3" fill="#f0e0a0" opacity="0.600"/>
    <ellipse cx="229" cy="160" rx="5" ry="7" fill="#f4e6a8" opacity="0.600"/>
    <path d="M32 234Q40 224 56 222Q70 224 74 230Q84 232 80 236Q60 240 40 238Z" fill="#e2c078" opacity="0.650"/>
    <path d="M88 250Q96 242 106 244Q108 252 98 256Q90 256 88 250Z" fill="#e8c87c" opacity="0.750"/>
    <path d="M0 250Q60 262 140 258Q220 254 300 262L300 266Q220 260 140 264Q60 268 0 258Z" fill="#c0a060" opacity="0.250"/>
  </g>
  <path d="M310.0 294.0 L310.7 278.0 L312.5 264.0 L312.0 250.0 L308.0 242.0 L303.0 228.0 L296.8 216.0 L292.0 210.0 L290.0 202.0 L290.5 198.0 L293.3 194.0 L292.7 186.7 L291.4 169.5 L294.8 161.0 L303.4 155.7 L320.0 152.0 L334.0 148.0 L348.0 145.0 L362.0 143.8 L376.0 144.4 L389.0 144.4 L403.0 146.5 L417.0 154.9 L431.0 163.0 L445.0 171.5 L459.0 181.2 L463.0 184.7 L470.0 183.3 L470.0 294.0Z" fill="#02030f"/>
  <path d="M339.4 30.7 L342.0 29.3 L344.7 30.7 L344.3 36.5 L346.3 41.4 L350.1 49.1 L355.0 57.9 L357.9 56.5 L362.8 55.6 L366.7 57.9 L367.7 63.7 L371.6 67.6 L372.5 74.4 L374.5 82.2 L377.4 95.9 L378.0 105.6 L376.4 110.5 L374.1 108.5 L373.5 101.7 L370.0 92.0 L366.7 94.9 L365.7 103.6 L369.6 115.3 L372.5 127.0 L375.4 138.7 L375.1 144.1 L370.0 144.1 L365.7 134.8 L360.8 121.2 L355.0 109.5 L348.2 121.2 L347.2 132.8 L349.2 142.6 L348.2 146.5 L338.5 146.5 L337.5 134.8 L336.9 121.2 L340.4 109.5 L344.3 99.8 L343.3 92.0 L346.3 82.2 L349.2 70.6 L350.1 64.7 L345.3 55.0 L340.8 45.3 L339.0 37.5Z" fill="#02030f"/>
  <text x="1" y="292" font-family="Liberation Sans, sans-serif" font-size="7" font-weight="bold" fill="#e46aa8" stroke="#fff" stroke-width="0.300">Salijoon.info</text>
</svg>
<!-- cursor highlight -->
<div class="abs" style="left:442px;top:484px;width:42px;height:37px;overflow:hidden"><div class="abs" style="left:0;top:0;width:42px;height:42px;border-radius:50%;background:radial-gradient(circle,rgba(250,206,30,0.580) 0,rgba(250,208,36,0.500) 45%,rgba(250,212,50,0.250) 75%,rgba(250,216,60,0) 100%)"></div></div>
<div class="abs" style="left:448px;top:521px;width:30px;height:5px;border-radius:0 0 15px 15px/0 0 5px 5px;background:rgba(252,236,150,0.350)"></div>
<svg class="ic" style="left:452px;top:494px" width="28" height="28" viewBox="0 0 28 28"><circle cx="11.700" cy="7.300" r="3.200" fill="#2a30c4"/><circle cx="11.700" cy="7.300" r="1.300" fill="#8c92ec"/><path d="M4.400 11.200H9.800M13.400 11.200H16.600M10.800 13.400V16.800" stroke="#0a0a0a" stroke-width="1.300"/><path d="M14.600 21.700L21.300 15.400" stroke="#0a0a0a" stroke-width="1.500"/><rect x="12.600" y="19.700" width="4" height="4" fill="#0a0a0a"/><rect x="19.300" y="13.400" width="4" height="4" fill="#0a0a0a"/></svg>
<!-- snap indicator -->
<svg class="ic" style="left:521px;top:368px" width="10" height="10" viewBox="0 0 10 10"><circle cx="5" cy="5" r="4.200" fill="#fff" opacity="0.700"/><path d="M5 1V9M1 5H9" stroke="#111" stroke-width="1"/><path d="M5 0.400L6.200 2H3.800ZM5 9.600L6.200 8H3.800ZM0.400 5L2 3.800V6.200ZM9.600 5L8 3.800V6.200Z" fill="#111"/></svg>
<div class="abs" style="left:540px;top:367px;width:27px;height:11px;background:#fbfbfb;border:1px solid #e8e8e8"></div>
<span class="t" style="left:543px;top:367px;font-size:7.500px;color:#1f2a86">center</span>
<!-- vertical scrollbar -->
<div id="vscroll" class="abs">
  <div class="abs" style="left:1px;top:1px;width:11px;height:11px;background:#f1f1f1"></div>
  <div class="abs" style="left:1px;top:525px;width:11px;height:12px;background:#f1f1f1"></div>
  <div class="abs" style="left:1px;top:114px;width:10px;height:312px;background:#cdcdcd"></div>
  <svg class="ic" style="left:2px;top:2px" width="9" height="7" viewBox="0 0 9 7"><path d="M1.500 5L4.500 2L7.500 5" fill="none" stroke="#333" stroke-width="1.300"/></svg>
  <svg class="ic" style="left:2px;top:529px" width="9" height="7" viewBox="0 0 9 7"><path d="M1.500 2L4.500 5L7.500 2" fill="none" stroke="#333" stroke-width="1.300"/></svg>
</div>
<!-- ===== Document tab bar ===== -->
<div id="tabbar" class="abs">
  <div class="abs" style="left:35px;top:0;width:78px;height:14px;background:#cfe5f6"></div>
  <svg class="ic" style="left:22px;top:2px" width="11" height="10" viewBox="0 0 11 10"><path d="M5.5 0.4L0.4 5H1.8V9.6H4.4V6.4H6.6V9.6H9.2V5H10.6Z" fill="#222"/></svg>
  <span class="t" id="tabname" style="left:38px;top:2px;font-size:8px;color:#123"><span dir="rtl">گرافیک نقطه</span>.cdr*</span>
  <div class="abs" style="left:114px;top:1px;width:13px;height:12px;background:#dedede"></div>
  <svg class="ic" style="left:116px;top:3px" width="9" height="9" viewBox="0 0 9 9"><path d="M4.5 0.8V8.2M0.8 4.5H8.2" stroke="#b0b0b0" stroke-width="1.1"/></svg>
</div>

<!-- ===== Toolbox ===== -->
<div id="toolbox" class="abs">
  <!-- pick -->
  <svg class="ic" style="left:5px;top:5px" width="13" height="14" viewBox="0 0 13 14"><path d="M3 0.6V10L5.2 7.8L6.8 11.4L8.2 10.8L6.6 7.2H9.6Z" fill="#111"/><path d="M12.800 10.200V13.200H9.800Z" fill="#555"/></svg>
  <!-- shape -->
  <svg class="ic" style="left:5px;top:25px" width="13" height="14" viewBox="0 0 13 14"><path d="M3.6 0.6Q1.2 4 3.6 6.6Q4.6 8 3.2 10" fill="none" stroke="#333" stroke-width="1"/><circle cx="3.4" cy="3.4" r="1" fill="#fff" stroke="#333" stroke-width="0.7"/><path d="M5.8 5.6L10.6 9.2L8.4 9.6L7.6 11.8Z" fill="#111"/><path d="M12.800 10.200V13.200H9.800Z" fill="#555"/></svg>
  <div class="abs" style="left:3px;top:43px;width:15px;height:1px;background:#dadada"></div>
  <!-- knife (active) -->
  <div class="box" style="left:3px;top:47px;width:16px;height:17px;border-color:#c9c9c9"></div>
  <svg class="ic" style="left:4px;top:48px" width="14" height="15" viewBox="0 0 14 15"><path d="M1.800 2.800L11.800 2.200L8.800 5.800" fill="none" stroke="#111" stroke-width="1"/><path d="M1 3.400L3.200 2.400L12.200 10.200L10.800 12.400L9 11.800Z" fill="#111"/><path d="M14.400 11.400V14.400H11.400Z" fill="#555"/></svg>
  <!-- zoom -->
  <svg class="ic" style="left:5px;top:68px" width="13" height="14" viewBox="0 0 13 14"><circle cx="5" cy="5.4" r="3.8" fill="#fff" stroke="#333" stroke-width="1.1"/><path d="M7.8 8.2L11 11.4" stroke="#333" stroke-width="1.6"/><path d="M13 10.400V13.400H10Z" fill="#555"/></svg>
  <div class="abs" style="left:3px;top:87px;width:15px;height:1px;background:#dadada"></div>
  <!-- freehand -->
  <svg class="ic" style="left:4px;top:92px" width="14" height="14" viewBox="0 0 14 14"><path d="M3.600 0.600V4.400M1.700 2.500H5.500" stroke="#333" stroke-width="1"/><path d="M3.600 5.600V10.400L4.800 8.200L6 10.400L7.200 8.400L8.400 10.200Q10 9 11.400 9.600" fill="none" stroke="#222" stroke-width="1"/><path d="M13.800 10.400V13.400H10.800Z" fill="#555"/></svg>
  <!-- artistic media -->
  <svg class="ic" style="left:4px;top:112px" width="14" height="14" viewBox="0 0 14 14"><path d="M3 5Q2.4 1.2 5.2 1.4Q7.600 1.8 6.400 5.400Q5.400 8.600 7.400 10.200Q9.400 11 10.200 8.400" fill="none" stroke="#222" stroke-width="1.3"/><path d="M13.4 10.800V13.200H11Z" fill="#555"/></svg>
  <!-- rectangle -->
  <svg class="ic" style="left:4px;top:132px" width="14" height="14" viewBox="0 0 14 14"><rect x="1.600" y="1.600" width="9.800" height="9.200" fill="#fff" stroke="#333" stroke-width="1.100"/><path d="M13.800 10.400V13.400H10.800Z" fill="#555"/></svg>
  <!-- ellipse -->
  <svg class="ic" style="left:4px;top:151px" width="14" height="14" viewBox="0 0 14 14"><circle cx="6.400" cy="6.600" r="5" fill="#fff" stroke="#333" stroke-width="1.100"/><path d="M13.800 10.400V13.400H10.800Z" fill="#555"/></svg>
  <!-- polygon -->
  <svg class="ic" style="left:4px;top:170px" width="14" height="14" viewBox="0 0 14 14"><path d="M3.800 2.200H9.200L11.800 6.800L9.200 11.400H3.800L1.200 6.800Z" fill="#fff" stroke="#333" stroke-width="1.100"/><path d="M13.800 10.400V13.400H10.800Z" fill="#555"/></svg>
  <!-- text -->
  <svg class="ic" style="left:4px;top:194px" width="14" height="14" viewBox="0 0 14 14"><path d="M1.400 11.400L6 1.200L10.600 11.400M3 8H9" fill="none" stroke="#222" stroke-width="1.200"/><path d="M13.800 10.400V13.400H10.800Z" fill="#555"/></svg>
  <div class="abs" style="left:3px;top:213px;width:15px;height:1px;background:#dadada"></div>
  <!-- dimension -->
  <svg class="ic" style="left:4px;top:219px" width="14" height="14" viewBox="0 0 14 14"><path d="M2 10.200L10.600 2.400" stroke="#333" stroke-width="1"/><path d="M1 8.800L3.200 11.400M9.600 1.200L11.800 3.800" stroke="#333" stroke-width="1"/><path d="M13.800 10.400V13.400H10.800Z" fill="#555"/></svg>
  <!-- connector -->
  <svg class="ic" style="left:4px;top:239px" width="14" height="14" viewBox="0 0 14 14"><path d="M2.400 2.600L10.400 9.600" stroke="#222" stroke-width="1.200"/><rect x="1" y="1.200" width="2.800" height="2.800" fill="#c0702a" stroke="#7a3e10" stroke-width="0.600"/><rect x="9" y="8.200" width="2.800" height="2.800" fill="#c0702a" stroke="#7a3e10" stroke-width="0.600"/><path d="M13.800 10.400V13.400H10.800Z" fill="#555"/></svg>
  <div class="abs" style="left:3px;top:257px;width:15px;height:1px;background:#dadada"></div>
  <!-- drop shadow -->
  <svg class="ic" style="left:4px;top:263px" width="14" height="14" viewBox="0 0 14 14"><rect x="3.600" y="3.600" width="8" height="7.600" fill="#222"/><rect x="1.400" y="1.400" width="8" height="7.600" fill="#fff" stroke="#333" stroke-width="1"/><path d="M13.800 10.600V13.600H10.800Z" fill="#555"/></svg>
  <!-- transparency -->
  <svg class="ic" style="left:5px;top:283px" width="12" height="12" viewBox="0 0 12 12"><rect x="0.500" y="0.500" width="11" height="11" fill="#fff" stroke="#222" stroke-width="1"/><g fill="#222"><rect x="1" y="1" width="2" height="2"/><rect x="5" y="1" width="2" height="2"/><rect x="9" y="1" width="2" height="2"/><rect x="3" y="3" width="2" height="2"/><rect x="7" y="3" width="2" height="2"/><rect x="1" y="5" width="2" height="2"/><rect x="5" y="5" width="2" height="2"/><rect x="9" y="5" width="2" height="2"/><rect x="3" y="7" width="2" height="2"/><rect x="7" y="7" width="2" height="2"/><rect x="1" y="9" width="2" height="2"/><rect x="5" y="9" width="2" height="2"/><rect x="9" y="9" width="2" height="2"/></g></svg>
  <div class="abs" style="left:3px;top:301px;width:15px;height:1px;background:#dadada"></div>
  <!-- eyedropper -->
  <svg class="ic" style="left:4px;top:307px" width="14" height="14" viewBox="0 0 14 14"><path d="M1.600 11.400L2.200 9L7 4.200L8.800 6L4 10.800Z" fill="#c47a3a" stroke="#333" stroke-width="0.700"/><path d="M7 2.600L10.400 6L11.800 3.200Q12 1.400 10.200 1.200Z" fill="#222"/><path d="M13.800 10.400V13.400H10.800Z" fill="#555"/></svg>
  <!-- fill -->
  <svg class="ic" style="left:4px;top:327px" width="14" height="14" viewBox="0 0 14 14"><path d="M1.200 7L6 2.200L11 7.200L6.400 11.600Z" fill="#fff" stroke="#222" stroke-width="1.100"/><path d="M3 7.400L6 4.600L9 7.400Z" fill="#c03a2a"/><path d="M11.400 8.400Q12.800 10.400 11.400 11.200Q10 10.400 11.400 8.400Z" fill="#c03a2a"/><path d="M13.800 10.600V13.600H10.800Z" fill="#555"/></svg>
  <div class="abs" style="left:3px;top:346px;width:15px;height:1px;background:#dadada"></div>
  <svg class="ic" style="left:6px;top:356px" width="10" height="10" viewBox="0 0 10 10"><path d="M5 0.800V9.200M0.800 5H9.200" stroke="#aaa" stroke-width="1.100"/></svg>
</div>
<!-- ===== Page navigator / scrollbar ===== -->
<div id="pagenav" class="abs">
  <div class="abs" style="left:0;top:0;width:11px;height:14px;background:#f0f0f0"></div>
  <div class="abs" style="left:11px;top:0;width:512px;height:2px;background:#fff"></div>
  <div class="abs" style="left:11px;top:1.500px;width:512px;height:1px;background:#b4b4b4"></div>
  <svg class="ic" style="left:12px;top:2px" width="100" height="11" viewBox="0 0 100 11" fill="#b4b4b4" stroke="none" font-family="Liberation Sans, sans-serif" font-size="8">
    <rect x="1.500" y="1.500" width="6" height="8" fill="none" stroke="#8a8a8a" stroke-width="0.900"/><path d="M4.500 4V8M2.800 6H6.200" stroke="#8a8a8a" stroke-width="0.800"/>
    <rect x="12" y="2" width="1.200" height="7"/><path d="M18 2V9L13.600 5.500Z"/>
    <path d="M29 2V9L24 5.500Z"/>
    <text x="34" y="8.500" fill="#b8b8b8">1 of 1</text>
    <path d="M61 2V9L66 5.500Z"/>
    <path d="M72 2V9L76.400 5.500Z"/><rect x="76.800" y="2" width="1.200" height="7"/>
    <rect x="83.500" y="1.500" width="6" height="8" fill="none" stroke="#8a8a8a" stroke-width="0.900"/><path d="M86.500 4V8M84.800 6H88.200" stroke="#8a8a8a" stroke-width="0.800"/>
  </svg>
  <svg class="ic" style="left:108px;top:0" width="44" height="14" viewBox="0 0 44 14"><path d="M0.500 2L3.500 13H36.500L41 2" fill="#fff" stroke="#bdbdbd" stroke-width="1"/></svg>
  <span class="t" style="left:116px;top:2.500px;font-size:7.600px;color:#111">Page 1</span>
  <div class="abs" style="left:519px;top:2px;width:3px;height:11px;background:repeating-linear-gradient(#f3f3f3 0 1px,#d4d4d4 1px 2px)"></div>
  <div class="abs" style="left:522px;top:1.500px;width:1px;height:12px;background:#8a8a8a"></div>
  <div class="abs" style="left:523px;top:0;width:510px;height:13.500px;background:#fff"></div>
  <div class="abs" style="left:524px;top:2px;width:10px;height:11px;background:#f1f1f1"></div>
  <div class="abs" style="left:1010px;top:2px;width:11px;height:11px;background:#f1f1f1"></div>
  <svg class="ic" style="left:524px;top:3.500px" width="8" height="8" viewBox="0 0 8 8"><path d="M5.500 1L2.500 4L5.500 7" fill="none" stroke="#222" stroke-width="1.400"/></svg>
  <div class="abs" style="left:595px;top:2px;width:368px;height:10px;background:#cdcdcd"></div>
  <svg class="ic" style="left:1011px;top:3px" width="8" height="8" viewBox="0 0 8 8"><path d="M2.500 1L5.500 4L2.500 7" fill="none" stroke="#222" stroke-width="1.400"/></svg>
  <svg class="ic" style="left:1022px;top:2px" width="10" height="10" viewBox="0 0 10 10"><circle cx="4" cy="4" r="2.800" fill="#fff" stroke="#666" stroke-width="0.900"/><path d="M6.200 6.200L9 9" stroke="#666" stroke-width="1.200"/><path d="M4 2.600V5.400M2.600 4H5.400" stroke="#666" stroke-width="0.700"/></svg>
</div>

<!-- ===== Document palette ===== -->
<div id="docpal" class="abs">
  <div class="abs" style="left:1px;top:1px;width:3px;height:11px;background:repeating-linear-gradient(#f3f3f3 0 1px,#cfcfcf 1px 2px)"></div>
  <svg class="ic" style="left:8px;top:3px" width="5" height="7" viewBox="0 0 5 7"><path d="M1 0.500L4.200 3.500L1 6.500Z" fill="#444"/></svg>
  <svg class="ic" style="left:18px;top:1px" width="11" height="11" viewBox="0 0 11 11"><path d="M1 10L1.600 8L5.800 3.800L7.200 5.200L3 9.400Z" fill="#b97a45" stroke="#333" stroke-width="0.600"/><path d="M5.800 2.400L8.600 5.200L9.800 2.800Q10 1.200 8.400 1Z" fill="#222"/></svg>
  <svg class="ic" style="left:33px;top:2px" width="6" height="9" viewBox="0 0 6 9"><path d="M4.600 1L1.400 4.500L4.600 8" fill="none" stroke="#c4c4c4" stroke-width="1"/></svg>
  <div class="abs" style="left:42px;top:0;width:69px;height:13px;border:1px solid #b4b4b4;background:#fff"></div>
  <svg class="ic" style="left:43px;top:1px" width="11" height="11" viewBox="0 0 11 11"><path d="M1.500 9.500L9.500 1.500" stroke="#c23a2a" stroke-width="0.900"/></svg>
  <div class="abs" style="left:54px;top:1px;width:11.500px;height:11px;background:#e8391f"></div>
  <div class="abs" style="left:65.500px;top:1px;width:11.500px;height:11px;background:#3b2fa2"></div>
  <div class="abs" style="left:77px;top:1px;width:10.500px;height:11px;background:#1a1a1a"></div>
  <div class="abs" style="left:87.500px;top:1px;width:11.500px;height:11px;background:#383838"></div>
  <svg class="ic" style="left:1004px;top:2px" width="8" height="9" viewBox="0 0 8 9"><path d="M2 1L6 4.500L2 8" fill="none" stroke="#c8c8c8" stroke-width="1.100"/></svg>
  <svg class="ic" style="left:1017px;top:2px" width="9" height="9" viewBox="0 0 9 9"><path d="M1 1.500L4 4.500L1 7.500M5 1.500L8 4.500L5 7.500" fill="none" stroke="#c8c8c8" stroke-width="1"/></svg>
  <div class="abs" style="left:1031px;top:0;width:2px;height:13px;background:#fff"></div>
</div>

<!-- ===== Status bar ===== -->
<div id="statusbar" class="abs">
  <svg class="ic" style="left:4px;top:5px" width="15" height="15" viewBox="0 0 15 15"><circle cx="7" cy="7" r="3.600" fill="none" stroke="#222" stroke-width="1.600"/><g stroke="#222" stroke-width="2"><path d="M7 1V2.800M7 11.200V13M1 7H2.800M11.200 7H13M2.800 2.800L4 4M10 10L11.200 11.200M11.200 2.800L10 4M4 10L2.800 11.200"/></g><path d="M14.400 11.600V14.400H11.600Z" fill="#555"/></svg>
  <span class="t" id="st1" style="left:24px;top:7px;font-size:7.900px">Slice an object to split it into separate objects.</span>
  <span class="t" id="st2" style="left:199.500px;top:7px;font-size:7.550px">Bitmap (RGB) on Layer 1 102 x 102 dpi</span>
  <!-- fill -->
  <svg class="ic" style="left:954px;top:6px" width="13" height="13" viewBox="0 0 13 13"><path d="M1 6.500L5.600 2L10.400 6.800L6 11Z" fill="#fff" stroke="#222" stroke-width="1"/><path d="M3 7L5.800 4.400L8.600 7Z" fill="#c03a2a"/><path d="M10.800 8Q12 9.800 10.800 10.600Q9.600 9.800 10.800 8Z" fill="#c03a2a"/></svg>
  <div class="abs" style="left:967px;top:4px;width:15px;height:15px;background:#fff;border:1px solid #cfcfcf"></div>
  <svg class="ic" style="left:967px;top:4px" width="15" height="15" viewBox="0 0 15 15"><path d="M1.500 13.500L13.500 1.500" stroke="#b8402f" stroke-width="1.400"/></svg>
  <span class="t" style="left:985px;top:7px;font-size:8px">None</span>
  <!-- outline -->
  <svg class="ic" style="left:1091px;top:5px" width="8" height="14" viewBox="0 0 8 14"><path d="M2 5.600L4 1.200L6 5.600L5.400 8H2.600Z" fill="#fff" stroke="#444" stroke-width="0.900"/><path d="M4 3V6" stroke="#444" stroke-width="0.700"/><rect x="2.200" y="8.600" width="3.600" height="3.400" fill="#fff" stroke="#555" stroke-width="0.800"/></svg>
  <div class="abs" style="left:1100px;top:4px;width:15px;height:15px;background:#fff;border:1px solid #cfcfcf"></div>
  <svg class="ic" style="left:1100px;top:4px" width="15" height="15" viewBox="0 0 15 15"><path d="M1.500 13.500L13.500 1.500" stroke="#b8402f" stroke-width="1.400"/></svg>
  <span class="t" style="left:1118px;top:7px;font-size:8px">None</span>
  <div class="sep" style="left:1254px;top:3px;height:19px"></div>
  <svg class="ic" style="left:1261px;top:6px" width="12" height="12" viewBox="0 0 12 12"><rect x="0.800" y="0.800" width="10.400" height="7.600" fill="#d6453a" stroke="#3c6fb4" stroke-width="1"/><rect x="1.400" y="4.600" width="9.200" height="3.400" fill="#4a8ed6"/><path d="M6 8.600V10.600M3 11H9" stroke="#444" stroke-width="1"/></svg>
</div>
<!-- ===== Bitmap Mask docker ===== -->
<div id="docker" class="abs"></div>
<div class="abs" style="left:1057px;top:78px;width:195px;height:15px;background:#f0f0f0"></div>
<span class="t" id="dtitle" style="left:1062px;top:81px;font-size:8px;color:#111">Bitmap Mask</span>
<svg class="ic" style="left:1242px;top:82px" width="8" height="7" viewBox="0 0 8 7"><path d="M0.600 0.800L3.600 3.500L0.600 6.200ZM4.200 0.800L7.200 3.500L4.200 6.200Z" fill="#c2c2c2"/></svg>
<div class="abs" style="left:1057px;top:93px;width:196px;height:1px;background:#b5d9ea"></div>
<div class="abs" style="left:1057px;top:94px;width:195px;height:19px;background:#f8f8f8"></div>
<svg class="ic" style="left:1060px;top:97px" width="13" height="13" viewBox="0 0 13 13"><path d="M1.200 11.800L1.800 9.600L6.400 5L8 6.600L3.400 11.200Z" fill="#b9733c" stroke="#333" stroke-width="0.600"/><path d="M6.400 3.400L9.600 6.600L11.200 3.800Q11.600 1.800 9.400 1.600Z" fill="#222"/></svg>
<svg class="ic" style="left:1080px;top:96px" width="13" height="14" viewBox="0 0 13 14"><path d="M4 1.600H1.600V11.800H4" fill="none" stroke="#222" stroke-width="1.100"/><rect x="0.800" y="0.800" width="1.600" height="1.600" fill="#222"/><rect x="0.800" y="11" width="1.600" height="1.600" fill="#222"/><rect x="4.600" y="3.600" width="7.200" height="8.400" fill="#fff" stroke="#444" stroke-width="0.900"/><path d="M4.600 6.400H11.800M4.600 9.200H11.800M8.200 3.600V12" stroke="#444" stroke-width="0.800"/><path d="M6.400 1.200H10V3.600" fill="none" stroke="#444" stroke-width="0.900"/></svg>
<div class="abs" style="left:1057px;top:113px;width:195px;height:125px;background:#fff"></div>
<div class="abs" style="left:1061px;top:117px;width:175px;height:13px;background:#e3f0fb"></div>
<svg class="ic" style="left:1064px;top:118.6px" width="9" height="9" viewBox="0 0 9 9"><rect x="0.500" y="0.500" width="8" height="8" fill="#fff" stroke="#b4b4b4" stroke-width="0.900"/><path d="M2 4.600L3.800 6.400L7 2.400" fill="none" stroke="#111" stroke-width="1.200"/></svg>
<div class="abs" style="left:1076px;top:117.8px;width:139.500px;height:10.800px;background:#000"></div>
<span class="t" style="left:1219px;top:118.4px;font-size:8px;color:#222">49</span>
<svg class="ic" style="left:1064px;top:132.0px" width="9" height="9" viewBox="0 0 9 9"><rect x="0.500" y="0.500" width="8" height="8" fill="#fff" stroke="#d2d2d2" stroke-width="0.900"/></svg>
<div class="abs" style="left:1076px;top:131.2px;width:139.500px;height:10.800px;background:#000"></div>
<span class="t" style="left:1219px;top:131.8px;font-size:8px;color:#222">0</span>
<svg class="ic" style="left:1064px;top:145.4px" width="9" height="9" viewBox="0 0 9 9"><rect x="0.500" y="0.500" width="8" height="8" fill="#fff" stroke="#d2d2d2" stroke-width="0.900"/></svg>
<div class="abs" style="left:1076px;top:144.6px;width:139.500px;height:10.800px;background:#000"></div>
<span class="t" style="left:1219px;top:145.2px;font-size:8px;color:#222">0</span>
<svg class="ic" style="left:1064px;top:158.8px" width="9" height="9" viewBox="0 0 9 9"><rect x="0.500" y="0.500" width="8" height="8" fill="#fff" stroke="#d2d2d2" stroke-width="0.900"/></svg>
<div class="abs" style="left:1076px;top:158.0px;width:139.500px;height:10.800px;background:#000"></div>
<span class="t" style="left:1219px;top:158.6px;font-size:8px;color:#222">0</span>
<svg class="ic" style="left:1064px;top:172.2px" width="9" height="9" viewBox="0 0 9 9"><rect x="0.500" y="0.500" width="8" height="8" fill="#fff" stroke="#d2d2d2" stroke-width="0.900"/></svg>
<div class="abs" style="left:1076px;top:171.4px;width:139.500px;height:10.800px;background:#000"></div>
<span class="t" style="left:1219px;top:172.0px;font-size:8px;color:#222">0</span>
<svg class="ic" style="left:1064px;top:185.6px" width="9" height="9" viewBox="0 0 9 9"><rect x="0.500" y="0.500" width="8" height="8" fill="#fff" stroke="#d2d2d2" stroke-width="0.900"/></svg>
<div class="abs" style="left:1076px;top:184.8px;width:139.500px;height:10.800px;background:#000"></div>
<span class="t" style="left:1219px;top:185.4px;font-size:8px;color:#222">0</span>
<svg class="ic" style="left:1064px;top:199.0px" width="9" height="9" viewBox="0 0 9 9"><rect x="0.500" y="0.500" width="8" height="8" fill="#fff" stroke="#d2d2d2" stroke-width="0.900"/></svg>
<div class="abs" style="left:1076px;top:198.2px;width:139.500px;height:10.800px;background:#000"></div>
<span class="t" style="left:1219px;top:198.8px;font-size:8px;color:#222">0</span>
<svg class="ic" style="left:1064px;top:212.4px" width="9" height="9" viewBox="0 0 9 9"><rect x="0.500" y="0.500" width="8" height="8" fill="#fff" stroke="#d2d2d2" stroke-width="0.900"/></svg>
<div class="abs" style="left:1076px;top:211.6px;width:139.500px;height:10.800px;background:#000"></div>
<span class="t" style="left:1219px;top:212.2px;font-size:8px;color:#222">0</span>
<svg class="ic" style="left:1064px;top:225.8px" width="9" height="9" viewBox="0 0 9 9"><rect x="0.500" y="0.500" width="8" height="8" fill="#fff" stroke="#d2d2d2" stroke-width="0.900"/></svg>
<div class="abs" style="left:1076px;top:225.0px;width:139.500px;height:10.800px;background:#000"></div>
<span class="t" style="left:1219px;top:225.6px;font-size:8px;color:#222">0</span>
<!-- list scrollbar -->
<div class="abs" style="left:1238px;top:116px;width:10px;height:122px;background:#f4f4f4"></div>
<div class="abs" style="left:1238.500px;top:128px;width:9.500px;height:88px;background:#cdcdcd"></div>
<svg class="ic" style="left:1239px;top:119px" width="8" height="7" viewBox="0 0 8 7"><path d="M1.200 5L4 2L6.800 5" fill="none" stroke="#222" stroke-width="1.300"/></svg>
<svg class="ic" style="left:1239px;top:228px" width="8" height="7" viewBox="0 0 8 7"><path d="M1.200 2L4 5L6.800 2" fill="none" stroke="#222" stroke-width="1.300"/></svg>
<!-- save / open / delete -->
<svg class="ic" style="left:1060px;top:244px" width="12" height="12" viewBox="0 0 12 12"><path d="M1 1H9.400L11 2.600V11H1Z" fill="#222"/><rect x="3.200" y="1.600" width="5" height="3" fill="#f3f3f3"/><rect x="6.200" y="2" width="1.300" height="2" fill="#222"/><rect x="3" y="7" width="6" height="3" fill="#666"/></svg>
<svg class="ic" style="left:1079px;top:244px" width="13" height="12" viewBox="0 0 13 12"><path d="M1.400 10.600V1.400H4.800L6 2.800H10.200V4.600" fill="none" stroke="#222" stroke-width="1.200"/><path d="M1.400 10.600L3.200 4.800H12L10.200 10.600Z" fill="#fff" stroke="#222" stroke-width="1.200"/></svg>
<svg class="ic" style="left:1238px;top:244px" width="11" height="12" viewBox="0 0 11 12"><path d="M1 2.600H10M3.800 2.400V1H7.200V2.400" fill="none" stroke="#222" stroke-width="1.200"/><path d="M2 3.800H9L8.400 11.400H2.600Z" fill="#222"/><path d="M4.200 5V10M5.500 5V10M6.800 5V10" stroke="#f3f3f3" stroke-width="0.500"/></svg>
<span class="t" style="left:1059px;top:268px;font-size:7.600px">Tolerance:</span>
<!-- slider -->
<div class="abs" style="left:1062px;top:287px;width:134px;height:3px;border-top:1px solid #cdcdcd;border-bottom:1px solid #cdcdcd;background:#f8f8f8"></div>
<div class="abs" style="left:1062px;top:285px;width:1px;height:7px;background:#cfcfcf"></div>
<div class="abs" style="left:1095px;top:286px;width:1px;height:5px;background:#d6d6d6"></div>
<div class="abs" style="left:1162px;top:286px;width:1px;height:5px;background:#d6d6d6"></div>
<div class="abs" style="left:1195px;top:285px;width:1px;height:7px;background:#cfcfcf"></div>
<div class="abs" style="left:1125px;top:283px;width:5px;height:12px;background:#f0f0f0;border:1px solid #b0b0b0"></div>
<div class="field" style="left:1203px;top:281px;width:33px;height:16px"></div>
<span class="t" style="left:1206px;top:284px;font-size:8px">49</span>
<div class="abs" style="left:1224px;top:282px;width:11px;height:14px;background:#f0f0f0;border-left:1px solid #d4d4d4"></div>
<div class="arrow" style="left:1228px;top:285px;border-left-width:2px;border-right-width:2px;border-top:0;border-bottom:2.500px solid #555"></div>
<div class="arrow" style="left:1228px;top:291px;border-left-width:2px;border-right-width:2px;border-top-width:2.500px"></div>
<span class="t" style="left:1240px;top:284px;font-size:8px">%</span>
<span class="t" style="left:1059px;top:306px;font-size:8px">Colors:</span>
<div class="abs" style="left:1092.500px;top:306.500px;width:7px;height:7px;border-radius:50%;border:1px solid #bdbdbd;background:#fff"></div>
<span class="t" style="left:1103px;top:306px;font-size:8px">Hide selected</span>
<div class="abs" style="left:1092.500px;top:320px;width:7px;height:7px;border-radius:50%;border:1px solid #999;background:#fff"></div>
<div class="abs" style="left:1094.500px;top:322px;width:3px;height:3px;border-radius:50%;background:#111"></div>
<span class="t" style="left:1103px;top:319.500px;font-size:7.800px">Show selected</span>
<div class="abs" style="left:1058px;top:343px;width:194px;height:15px;background:#ececec;border:1px solid #d0d0d0"></div>
<span class="t" id="apply" style="left:1145px;top:345.500px;font-size:8px">Apply</span>
<!-- ===== Docker tabs ===== -->
<div id="dtabs" class="abs"></div>
<div class="abs" style="left:1253px;top:78px;width:14px;height:15px;background:#f0f0f0"></div>
<svg class="ic" style="left:1255px;top:82px" width="7" height="7" viewBox="0 0 7 7"><path d="M0.800 0.800L6.200 6.200M6.200 0.800L0.800 6.200" stroke="#c2c2c2" stroke-width="1"/></svg>
<div class="abs" style="left:1253px;top:268.500px;width:13px;height:82.500px;background:#cfe5f6"></div>
<svg class="ic" style="left:1253px;top:94px" width="13" height="13" viewBox="0 0 13 13"><path d="M1.600 0.800V9.600L3.600 7.600L5 10.800L6.400 10.200L5 7H7.800Z" fill="#111"/><text x="7" y="7" font-family="Liberation Sans, sans-serif" font-size="8" fill="#222">?</text></svg>
<span class="t vt" style="left:1254px;top:110px">Hints</span>
<svg class="ic" style="left:1253px;top:146px" width="13" height="13" viewBox="0 0 13 13"><path d="M1 5L4.400 1.600L8 5.200L4.600 8.400Z" fill="#fff" stroke="#222" stroke-width="1"/><path d="M2.400 5.200L4.400 3.400L6.400 5.200Z" fill="#c58a3a"/><path d="M7 7H12M7 8.800H12M7 10.600H12" stroke="#888" stroke-width="0.900"/></svg>
<span class="t vt" style="left:1254px;top:162px">Properties</span>
<svg class="ic" style="left:1253px;top:215px" width="13" height="13" viewBox="0 0 13 13"><path d="M6.500 1L11.600 4.200L6.500 7.400L1.400 4.200Z" fill="#fff" stroke="#222" stroke-width="1"/><path d="M1.400 6.600L6.500 9.800L11.600 6.600M1.400 8.800L6.500 12L11.600 8.800" fill="none" stroke="#222" stroke-width="1"/></svg>
<span class="t vt" style="left:1254px;top:230px">Objects</span>
<svg class="ic" style="left:1253px;top:276px" width="13" height="13" viewBox="0 0 13 13"><rect x="2" y="2" width="9" height="9" fill="none" stroke="#222" stroke-width="1"/><g fill="#111"><rect x="1" y="1" width="2" height="2"/><rect x="10" y="1" width="2" height="2"/><rect x="1" y="10" width="2" height="2"/><rect x="10" y="10" width="2" height="2"/></g></svg>
<span class="t vt" style="left:1254px;top:291px;color:#1c3a70">Bitmap Mask</span>
<svg class="ic" style="left:1255px;top:355px" width="9" height="9" viewBox="0 0 9 9"><path d="M4.500 0.800V8.200M0.800 4.500H8.200" stroke="#b0b0b0" stroke-width="1.100"/></svg>

<!-- ===== Colour palette ===== -->
<div id="palette" class="abs"></div>
<div class="abs" style="left:1269px;top:79px;width:9px;height:5px;background:repeating-linear-gradient(90deg,#f1f1f1 0 1px,#d2d2d2 1px 2px)"></div>
<svg class="ic" style="left:1271px;top:87px" width="5" height="7" viewBox="0 0 5 7"><path d="M1 0.500L4.200 3.500L1 6.500Z" fill="#444"/></svg>
<svg class="ic" style="left:1268px;top:98px" width="11" height="11" viewBox="0 0 11 11"><path d="M1 10L1.600 8L5.800 3.800L7.200 5.200L3 9.400Z" fill="#d4d4d4"/><path d="M5.800 2.400L8.600 5.200L9.800 2.800Q10 1.200 8.400 1Z" fill="#c4c4c4"/></svg>
<svg class="ic" style="left:1269px;top:112px" width="9" height="6" viewBox="0 0 9 6"><path d="M1 5L4.500 1.400L8 5" fill="none" stroke="#d0d0d0" stroke-width="1"/></svg>
<div class="abs" style="left:1267.500px;top:121.30px;width:11.500px;height:11.37px;background:#fff;border:1px solid #bdbdbd"></div><svg class="ic" style="left:1268px;top:121.30px" width="11" height="11" viewBox="0 0 11 11"><path d="M1.500 9.500L9.500 1.500" stroke="#c23a2a" stroke-width="0.900"/></svg>
<div class="abs" style="left:1267.500px;top:132.67px;width:11.500px;height:11.67px;background:#1a1a1a"></div>
<div class="abs" style="left:1267.500px;top:144.04px;width:11.500px;height:11.67px;background:#333333"></div>
<div class="abs" style="left:1267.500px;top:155.41px;width:11.500px;height:11.67px;background:#4d4d4d"></div>
<div class="abs" style="left:1267.500px;top:166.78px;width:11.500px;height:11.67px;background:#666666"></div>
<div class="abs" style="left:1267.500px;top:178.15px;width:11.500px;height:11.67px;background:#808080"></div>
<div class="abs" style="left:1267.500px;top:189.52px;width:11.500px;height:11.67px;background:#999999"></div>
<div class="abs" style="left:1267.500px;top:200.89px;width:11.500px;height:11.67px;background:#b3b3b3"></div>
<div class="abs" style="left:1267.500px;top:212.26px;width:11.500px;height:11.67px;background:#cccccc"></div>
<div class="abs" style="left:1267.500px;top:223.63px;width:11.500px;height:11.67px;background:#d9d9d9"></div>
<div class="abs" style="left:1267.500px;top:235.00px;width:11.500px;height:11.67px;background:#e8e8e8"></div>
<div class="abs" style="left:1267.500px;top:246.37px;width:11.500px;height:11.67px;background:#ffffff"></div>
<div class="abs" style="left:1267.500px;top:257.74px;width:11.500px;height:11.67px;background:#3a2f9e"></div>
<div class="abs" style="left:1267.500px;top:269.11px;width:11.500px;height:11.67px;background:#0a96dc"></div>
<div class="abs" style="left:1267.500px;top:280.48px;width:11.500px;height:11.67px;background:#00935a"></div>
<div class="abs" style="left:1267.500px;top:291.85px;width:11.500px;height:11.67px;background:#ffd60a"></div>
<div class="abs" style="left:1267.500px;top:303.22px;width:11.500px;height:11.67px;background:#e8391f"></div>
<div class="abs" style="left:1267.500px;top:314.59px;width:11.500px;height:11.67px;background:#e8239a"></div>
<div class="abs" style="left:1267.500px;top:325.96px;width:11.500px;height:11.67px;background:#b0529a"></div>
<div class="abs" style="left:1267.500px;top:337.33px;width:11.500px;height:11.67px;background:#ff8a0a"></div>
<div class="abs" style="left:1267.500px;top:348.70px;width:11.500px;height:11.67px;background:#ffc8c4"></div>
<div class="abs" style="left:1267.500px;top:360.07px;width:11.500px;height:11.67px;background:#85706a"></div>
<div class="abs" style="left:1267.500px;top:371.44px;width:11.500px;height:11.67px;background:#dcd8f8"></div>
<div class="abs" style="left:1267.500px;top:382.81px;width:11.500px;height:11.67px;background:#b4a8e4"></div>
<div class="abs" style="left:1267.500px;top:394.18px;width:11.500px;height:11.67px;background:#7a9ada"></div>
<div class="abs" style="left:1267.500px;top:405.55px;width:11.500px;height:11.67px;background:#8a7ad0"></div>
<div class="abs" style="left:1267.500px;top:416.92px;width:11.500px;height:11.67px;background:#9a92c0"></div>
<div class="abs" style="left:1267.500px;top:428.29px;width:11.500px;height:11.67px;background:#4a6090"></div>
<div class="abs" style="left:1267.500px;top:439.66px;width:11.500px;height:11.67px;background:#55506e"></div>
<div class="abs" style="left:1267.500px;top:451.03px;width:11.500px;height:11.67px;background:#6a86a4"></div>
<div class="abs" style="left:1267.500px;top:462.40px;width:11.500px;height:11.67px;background:#0a86d0"></div>
<div class="abs" style="left:1267.500px;top:473.77px;width:11.500px;height:11.67px;background:#a8d8f4"></div>
<div class="abs" style="left:1267.500px;top:485.14px;width:11.500px;height:11.67px;background:#bcd0e0"></div>
<div class="abs" style="left:1267.500px;top:496.51px;width:11.500px;height:11.67px;background:#94a4b0"></div>
<div class="abs" style="left:1267.500px;top:507.88px;width:11.500px;height:11.67px;background:#6c7880"></div>
<div class="abs" style="left:1267.500px;top:519.25px;width:11.500px;height:11.67px;background:#3c4850"></div>
<div class="abs" style="left:1267.500px;top:530.62px;width:11.500px;height:11.67px;background:#4c6c70"></div>
<div class="abs" style="left:1267.500px;top:541.99px;width:11.500px;height:11.67px;background:#3e8480"></div>
<div class="abs" style="left:1267.500px;top:553.36px;width:11.500px;height:11.67px;background:#6c9898"></div>
<div class="abs" style="left:1267.500px;top:564.73px;width:11.500px;height:11.67px;background:#5cac9c"></div>
<div class="abs" style="left:1267.500px;top:576.10px;width:11.500px;height:11.67px;background:#5cac7c"></div>
<div class="abs" style="left:1267.500px;top:587.47px;width:11.500px;height:11.67px;background:#74d0e4"></div>
<div class="abs" style="left:1267.500px;top:598.84px;width:11.500px;height:11.67px;background:#4ca8c4"></div>
<div class="abs" style="left:1267.500px;top:610.21px;width:11.500px;height:11.67px;background:#bcd0c0"></div>
<div class="abs" style="left:1267.500px;top:621.58px;width:11.500px;height:11.67px;background:#d8f4dc"></div>
<div class="abs" style="left:1267.500px;top:632.95px;width:11.500px;height:7.35px;background:#a8e4b4"></div>
<svg class="ic" style="left:1269px;top:641px" width="9" height="6" viewBox="0 0 9 6"><path d="M1 1L4.500 4.600L8 1" fill="none" stroke="#bcbcbc" stroke-width="1"/></svg>
<svg class="ic" style="left:1269px;top:656px" width="9" height="9" viewBox="0 0 9 9"><path d="M1 1.500L4 4.500L1 7.500M5 1.500L8 4.500L5 7.500" fill="none" stroke="#c8c8c8" stroke-width="1"/></svg>
<!-- ===== Windows taskbar ===== -->
<div id="taskbar" class="abs">
  <div class="abs" style="left:393px;top:0;width:32px;height:27px;background:#3c4b58"></div>
  <!-- running indicators -->
  <div class="abs" style="left:69px;top:25.500px;width:27px;height:1.500px;background:#7ab8ea"></div>
  <div class="abs" style="left:298px;top:25.500px;width:27px;height:1.500px;background:#7ab8ea"></div>
  <div class="abs" style="left:363px;top:25.500px;width:27px;height:1.500px;background:#7ab8ea"></div>
  <div class="abs" style="left:393px;top:25.500px;width:32px;height:1.500px;background:#8cc4f0"></div>
  <div class="abs" style="left:428px;top:25.500px;width:27px;height:1.500px;background:#7ab8ea"></div>
  <div class="abs" style="left:461px;top:25.500px;width:27px;height:1.500px;background:#7ab8ea"></div>
  <!-- start -->
  <svg class="ic" style="left:10px;top:7px" width="12" height="12" viewBox="0 0 12 12"><path d="M0 1.800L5.200 1V5.600H0ZM6 0.900L12 0V5.600H6ZM0 6.400H5.200V11L0 10.200ZM6 6.400H12V12L6 11.100Z" fill="#fff"/></svg>
  <!-- edge -->
  <svg class="ic" style="left:42px;top:5px" width="16" height="16" viewBox="0 0 16 16"><circle cx="8" cy="8" r="7.600" fill="#1f8fd8"/><path d="M1 10Q1 3 8 1.200Q14 1 15.400 7Q13 3.600 8.600 4.600Q4.600 6 5.400 11Q2.400 11.600 1 10Z" fill="#4fd08a"/><path d="M5.400 8.600Q5.600 5.800 8.400 5.600Q11.400 5.800 11.200 8.200Q10.800 9.800 9 9.600Q9.600 12.400 13.600 11.800Q11.600 15.400 7.600 15.200Q4.600 13.400 5.400 8.600Z" fill="#1660b0"/></svg>
  <!-- explorer -->
  <svg class="ic" style="left:75px;top:6px" width="16" height="14" viewBox="0 0 16 14"><path d="M0.600 2Q0.600 1 1.600 1H6L7.400 2.600H14.400Q15.400 2.600 15.400 3.600V12.400H0.600Z" fill="#f1c243"/><path d="M0.600 5H15.400V13H0.600Z" fill="#fbd968"/><rect x="4" y="8.600" width="8" height="4.400" fill="#4a8fc4"/><rect x="5.600" y="10.400" width="4.800" height="2.600" fill="#fbd968"/></svg>
  <!-- store -->
  <svg class="ic" style="left:107px;top:4px" width="16" height="18" viewBox="0 0 16 18"><path d="M5 5V3.400Q5 1.400 8 1.400Q11 1.400 11 3.400V5" fill="none" stroke="#f4f4f4" stroke-width="1.300"/><path d="M1 5H15V16.400H1Z" fill="#f4f4f4"/><rect x="5" y="7.600" width="2.600" height="2.600" fill="#e8502a"/><rect x="8.400" y="7.600" width="2.600" height="2.600" fill="#7cba2a"/><rect x="5" y="11" width="2.600" height="2.600" fill="#2a9ce0"/><rect x="8.400" y="11" width="2.600" height="2.600" fill="#f6b81a"/></svg>
  <!-- mail -->
  <svg class="ic" style="left:139px;top:5px" width="18" height="16" viewBox="0 0 18 16"><path d="M9 0.600L17 6V15H1V6Z" fill="#1a78c8"/><path d="M1 6.400L9 11.600L17 6.400V15H1Z" fill="#35a0ea"/><path d="M1 6.400L9 11.600L17 6.400" fill="none" stroke="#e8f4ff" stroke-width="1"/></svg>
  <!-- Ps -->
  <div class="abs" style="left:173px;top:5px;width:15px;height:15px;background:#0a2a44;border:1px solid #31a8ff;border-radius:2px"></div>
  <span class="t" style="left:175px;top:7px;font-size:8.500px;font-weight:bold;color:#31a8ff;letter-spacing:-0.300px">Ps</span>
  <!-- Id -->
  <div class="abs" style="left:206px;top:5px;width:15px;height:15px;background:#470a2a;border:1px solid #ff3f94;border-radius:2px"></div>
  <span class="t" style="left:209px;top:7px;font-size:8.500px;font-weight:bold;color:#ff5fa6">Id</span>
  <!-- OneNote -->
  <svg class="ic" style="left:238px;top:5px" width="16" height="16" viewBox="0 0 16 16"><rect x="5" y="1.600" width="10" height="12.800" fill="#e6d5ee"/><rect x="11.600" y="2.600" width="3.400" height="3" fill="#b47ac8"/><rect x="11.600" y="6.400" width="3.400" height="3" fill="#9a52b4"/><rect x="1" y="3.400" width="9" height="9.600" fill="#80397b"/><text x="5.500" y="11.400" font-family="Liberation Sans, sans-serif" font-size="8" font-weight="bold" fill="#fff" text-anchor="middle">N</text></svg>
  <!-- chrome -->
  <svg class="ic" style="left:271px;top:5px" width="16" height="16" viewBox="0 0 16 16"><circle cx="8" cy="8" r="7.600" fill="#e34133"/><path d="M8 8L1.400 4.200A7.600 7.600 0 0 0 7 15.500Z" fill="#2da94f"/><path d="M8 8L7 15.500A7.600 7.600 0 0 0 15.400 5.600Z" fill="#fbbc0a"/><path d="M8 8L15.400 5.600A7.600 7.600 0 0 0 1.400 4.200Z" fill="#e34133"/><circle cx="8" cy="8" r="3.600" fill="#fff"/><circle cx="8" cy="8" r="2.800" fill="#4a8af4"/></svg>
  <!-- firefox -->
  <svg class="ic" style="left:303px;top:4px" width="17" height="17" viewBox="0 0 17 17"><circle cx="8.500" cy="9.400" r="7.200" fill="#ff9a1f"/><path d="M2 6Q3 3.400 5 2.600Q5 4 6.400 4.600Q9 2 11 0.800Q11.600 3.400 14.400 5.600Q16.400 8.600 15 12Q13 16.200 8.500 16.400Q13.400 13 12 8.400Q9.400 5.400 6 7.400Q3 9.600 4.400 13.400Q1 10.400 2 6Z" fill="#ff4f2a"/><circle cx="8.800" cy="10" r="3.600" fill="#8a3fd6"/><path d="M5.400 8.600Q7.600 7.400 9.600 8.600Q7.800 9.200 7.400 10.600Q6 10 5.400 8.600Z" fill="#ffbd4f"/></svg>
  <!-- control panel -->
  <svg class="ic" style="left:337px;top:7px" width="15" height="12" viewBox="0 0 15 12"><rect x="0.500" y="0.500" width="14" height="10.400" fill="#5cb8f0"/><rect x="1.600" y="1.600" width="6" height="6.400" fill="#bfe4fa"/><circle cx="4.600" cy="4.800" r="2" fill="#2a7fc4"/><rect x="9" y="2" width="4.600" height="1.400" fill="#e8f6ff"/><rect x="9" y="4.400" width="4.600" height="1.400" fill="#e8f6ff"/><rect x="9" y="6.800" width="4.600" height="1.400" fill="#e8f6ff"/></svg>
  <!-- word -->
  <svg class="ic" style="left:369px;top:5px" width="16" height="16" viewBox="0 0 16 16"><rect x="5" y="1.600" width="10" height="12.800" fill="#dfe9f6"/><rect x="11" y="3" width="3.400" height="2.400" fill="#9fbfe6"/><rect x="11" y="6.400" width="3.400" height="2.400" fill="#9fbfe6"/><rect x="11" y="9.800" width="3.400" height="2.400" fill="#9fbfe6"/><rect x="1" y="3.400" width="9" height="9.600" fill="#2b5797"/><text x="5.500" y="11.200" font-family="Liberation Sans, sans-serif" font-size="7.500" font-weight="bold" fill="#fff" text-anchor="middle">W</text></svg>
  <!-- coreldraw -->
  <svg class="ic" style="left:400px;top:4px" width="18" height="18" viewBox="0 0 18 18"><circle cx="9" cy="9" r="8.600" fill="#132306"/><circle cx="9" cy="9" r="7.400" fill="none" stroke="#86c440" stroke-width="1.200"/><path d="M4.400 5L11.200 7.600L13 12.800L7.400 11.800Z" fill="#fff"/><path d="M4.400 5L9.600 9.800" stroke="#132306" stroke-width="0.700"/><path d="M11.400 13.400L13.800 11.400L14.600 13.800Z" fill="#fff"/></svg>
  <!-- bandicam record -->
  <svg class="ic" style="left:433px;top:5px" width="17" height="17" viewBox="0 0 17 17"><circle cx="8.500" cy="8.500" r="7.600" fill="#0c0c0c" stroke="#fff" stroke-width="1.400"/><circle cx="8.500" cy="8.500" r="4.200" fill="#ee2a24"/></svg>
  <!-- cocktail -->
  <svg class="ic" style="left:465px;top:4px" width="18" height="19" viewBox="0 0 18 19"><ellipse cx="11.800" cy="8.600" rx="4.400" ry="5.400" fill="#c9a23a"/><path d="M9 3.400L10.600 0.600L12 3L13.800 0.800L14.400 3.800" fill="#5b9a32" stroke="#5b9a32" stroke-width="0.800"/><path d="M1.600 6H8.400L5 10.600Z" fill="#e8502a"/><path d="M1 5.400H9L5 10.800Z" fill="none" stroke="#ddd" stroke-width="0.800"/><path d="M5 10.800V16.400M2.800 16.800H7.200" stroke="#ddd" stroke-width="0.900"/><circle cx="3" cy="3.600" r="1.300" fill="#ee4fa0"/></svg>
  <!-- tray -->
  <svg class="ic" style="left:1042px;top:7px" width="14" height="14" viewBox="0 0 14 14"><path d="M7.600 0.600A6.600 6.600 0 1 1 1 9.600A5.400 5.400 0 0 0 7.600 0.600Z" fill="#f6c52d"/></svg>
  <span class="t" style="left:1062px;top:9px;font-size:8.500px;color:#fff">43°F&nbsp; Clear</span>
  <svg class="ic" style="left:1117px;top:10px" width="10" height="7" viewBox="0 0 10 7"><path d="M1 5.600L5 1.400L9 5.600" fill="none" stroke="#fff" stroke-width="1.100"/></svg>
  <svg class="ic" style="left:1133px;top:7px" width="9" height="13" viewBox="0 0 9 13"><rect x="2.600" y="0.600" width="3.800" height="7.400" rx="1.800" fill="#fff"/><path d="M1 6Q1 10 4.500 10Q8 10 8 6M4.500 10V12.400M2.400 12.400H6.600" fill="none" stroke="#fff" stroke-width="0.900"/></svg>
  <svg class="ic" style="left:1147px;top:8px" width="13" height="12" viewBox="0 0 13 12"><rect x="3.600" y="1" width="8.800" height="6.400" fill="none" stroke="#fff" stroke-width="1"/><path d="M8 7.400V10M5.600 10.400H10.400" stroke="#fff" stroke-width="1"/><rect x="0.600" y="3" width="3.400" height="6.600" fill="#1e3240" stroke="#fff" stroke-width="0.900"/></svg>
  <svg class="ic" style="left:1164px;top:8px" width="13" height="11" viewBox="0 0 13 11"><path d="M0.800 3.800H3L6 1V10L3 7.200H0.800Z" fill="none" stroke="#fff" stroke-width="0.900"/><path d="M7.600 3.600Q8.800 5.500 7.600 7.400M9.400 2.200Q11.400 5.500 9.400 8.800M11 1Q13.600 5.500 11 10" fill="none" stroke="#fff" stroke-width="0.800"/></svg>
  <span class="t" style="left:1182px;top:9px;font-size:8px;color:#fff">ENG</span>
  <span class="t" style="left:1209px;top:2px;font-size:8px;color:#fff">9:17 PM</span>
  <span class="t" style="left:1206px;top:14.500px;font-size:8px;color:#fff">11/9/2021</span>
  <svg class="ic" style="left:1251px;top:8px" width="14" height="13" viewBox="0 0 14 13"><path d="M1.200 1.200H12.800V9.400H8L5.400 12V9.400H1.200Z" fill="none" stroke="#fff" stroke-width="1"/></svg>
</div>
<!-- ===== Bandicam overlay ===== -->
<div class="abs" style="left:509px;top:11px;width:233px;height:17px;background:#1c1e24"></div>
<svg class="ic" style="left:512px;top:13.700px" width="228" height="13" viewBox="0 0 228 13" fill="none" stroke="#e8e8e8" stroke-width="0.900" font-family="Liberation Sans, sans-serif">
  <path d="M2 3H9.600M2 6.500H9.600M2 10H9.600"/>
  <rect x="17.500" y="5" width="5.600" height="5.600"/><path d="M19.800 5V2.800H25.400V8.400H23.100"/>
  <path d="M31 4V9M29 6.500H33"/><circle cx="37" cy="6" r="2.400"/><path d="M38.800 7.800L40.600 9.600"/>
  <path d="M47.500 2V8.600M45.800 7L47.500 9L49.200 7M51 10.400H56V6.400"/>
  <text x="63" y="9.700" font-size="7.800" fill="#e0e0e0" stroke="none">Recording [00:01:15]</text>
  <rect x="141.500" y="3.800" width="2" height="6.600" fill="#e0261c" stroke="none"/><rect x="145.500" y="3.800" width="2" height="6.600" fill="#e0261c" stroke="none"/>
  <rect x="160" y="4" width="8" height="6.600" fill="#e0261c" stroke="none"/>
  <rect x="180.500" y="4.600" width="9" height="6.200" rx="0.800" fill="#e8e8e8"/><circle cx="185" cy="7.700" r="1.800" fill="#1c1e24"/><path d="M183 4.600L183.800 3.400H186.200L187 4.600" fill="#e8e8e8"/>
  <path d="M198 10.800L198.600 8.800L203.400 4L205 5.600L200.200 10.400Z" fill="#e8e8e8"/>
  <path d="M218.500 3.600L225 10M225 3.600L218.500 10" stroke="#9a9a9a"/>
</svg>
<span class="t bw" style="left:541.600px;top:3.570px;font-size:12.500px;transform:scaleX(1.190);text-transform:uppercase">www.</span>
<span class="t bw" style="left:588.800px;top:2.100px;font-size:16.700px;transform:scaleX(1.169)">BANDICAM</span>
<span class="t bw" style="left:696.600px;top:3.570px;font-size:12.500px;transform:scaleX(1.225);text-transform:uppercase">.com</span>
</body>
</html>
